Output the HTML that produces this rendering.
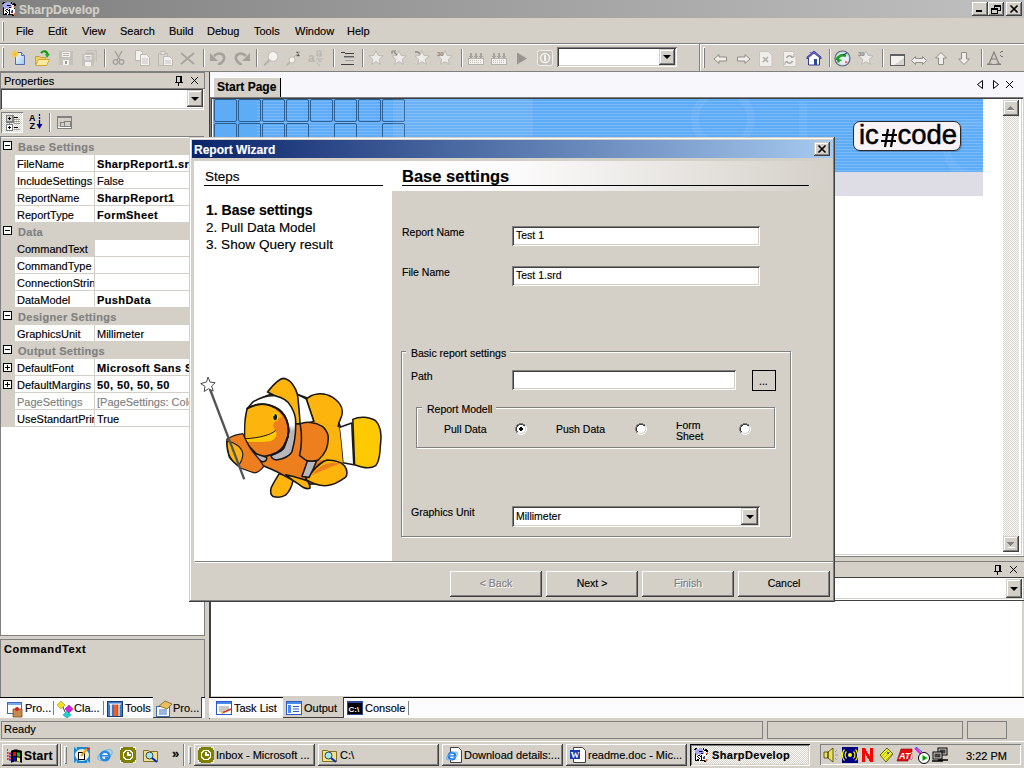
<!DOCTYPE html>
<html><head><meta charset="utf-8"><style>
*{margin:0;padding:0;box-sizing:border-box}
html,body{width:1024px;height:768px;overflow:hidden;background:#d4d0c8;font-family:"Liberation Sans",sans-serif;font-size:11px;color:#000}
.a{position:absolute}
.t{position:absolute;white-space:nowrap;line-height:1;-webkit-text-stroke:0.15px currentColor}
.raised{background:#d4d0c8;box-shadow:inset -1px -1px #404040,inset 1px 1px #fff,inset -2px -2px #808080,inset 2px 2px #d4d0c8}
.raised2{background:#d4d0c8;box-shadow:inset -1px -1px #404040,inset 1px 1px #d4d0c8,inset -2px -2px #808080,inset 2px 2px #fff}
.sunken{background:#fff;box-shadow:inset 1px 1px #808080,inset -1px -1px #fff,inset 2px 2px #404040,inset -2px -2px #d4d0c8}
.pressed{box-shadow:inset 1px 1px #000,inset -1px -1px #fff,inset 2px 2px #808080,inset -2px -2px #d4d0c8}
.thin{box-shadow:inset 1px 1px #808080,inset -1px -1px #fff}
.dd{position:absolute;background:#d4d0c8;box-shadow:inset -1px -1px #404040,inset 1px 1px #d4d0c8,inset -2px -2px #808080,inset 2px 2px #fff}
.dd:after{content:"";position:absolute;left:50%;top:50%;margin-left:-4px;margin-top:-2px;border-left:4px solid transparent;border-right:4px solid transparent;border-top:4px solid #000}
.ic{position:absolute;width:16px;height:16px}
.g{color:#808080}
.b{font-weight:bold}
</style></head><body>
<div class="a" style="left:0px;top:0px;width:1024px;height:18px;background:linear-gradient(to right,#808080,#c0c0c0)"></div>
<div class="t" style="left:19px;top:4px;font-size:12px;font-weight:bold;color:#d4d0c8">SharpDevelop</div>
<div class="a raised" style="left:972px;top:2px;width:16px;height:14px;"></div>
<div class="a raised" style="left:988px;top:2px;width:16px;height:14px;"></div>
<div class="a raised" style="left:1006px;top:2px;width:16px;height:14px;"></div>
<div class="a" style="left:976px;top:10px;width:6px;height:2px;background:#000"></div>
<div class="a" style="left:994px;top:5px;width:7px;height:6px;border:1px solid #000;border-top-width:2px"></div>
<div class="a" style="left:991px;top:8px;width:7px;height:6px;border:1px solid #000;border-top-width:2px;background:#d4d0c8"></div>
<svg class="a" style="left:1006px;top:2px" width="16" height="14"><path d="M4.5 3.5 L11.5 10.5 M11.5 3.5 L4.5 10.5" stroke="#000" stroke-width="1.6"/></svg>
<div class="a" style="left:2px;top:21px;width:2px;height:20px;box-shadow:inset 1px 1px #fff,inset -1px -1px #808080"></div>
<div class="t" style="left:16px;top:26px;">File</div>
<div class="t" style="left:48px;top:26px;">Edit</div>
<div class="t" style="left:82px;top:26px;">View</div>
<div class="t" style="left:120px;top:26px;">Search</div>
<div class="t" style="left:169px;top:26px;">Build</div>
<div class="t" style="left:207px;top:26px;">Debug</div>
<div class="t" style="left:254px;top:26px;">Tools</div>
<div class="t" style="left:295px;top:26px;">Window</div>
<div class="t" style="left:347px;top:26px;">Help</div>
<div class="a" style="left:0px;top:43px;width:1024px;height:1px;background:#808080"></div>
<div class="a" style="left:0px;top:44px;width:1024px;height:1px;background:#fff"></div>
<div class="a" style="left:2px;top:47px;width:2px;height:21px;box-shadow:inset 1px 1px #fff,inset -1px -1px #808080"></div>
<div class="a" style="left:703px;top:47px;width:2px;height:21px;box-shadow:inset 1px 1px #fff,inset -1px -1px #808080"></div>
<div class="a" style="left:0px;top:71px;width:1024px;height:1px;background:#808080"></div>
<div class="a" style="left:699px;top:44px;width:1px;height:27px;background:#808080"></div>
<div class="a" style="left:700px;top:44px;width:1px;height:27px;background:#fff"></div>
<div class="a" style="left:104px;top:49px;width:1px;height:18px;background:#808080"></div>
<div class="a" style="left:105px;top:49px;width:1px;height:18px;background:#fff"></div>
<div class="a" style="left:203px;top:49px;width:1px;height:18px;background:#808080"></div>
<div class="a" style="left:204px;top:49px;width:1px;height:18px;background:#fff"></div>
<div class="a" style="left:256px;top:49px;width:1px;height:18px;background:#808080"></div>
<div class="a" style="left:257px;top:49px;width:1px;height:18px;background:#fff"></div>
<div class="a" style="left:333px;top:49px;width:1px;height:18px;background:#808080"></div>
<div class="a" style="left:334px;top:49px;width:1px;height:18px;background:#fff"></div>
<div class="a" style="left:362px;top:49px;width:1px;height:18px;background:#808080"></div>
<div class="a" style="left:363px;top:49px;width:1px;height:18px;background:#fff"></div>
<div class="a" style="left:461px;top:49px;width:1px;height:18px;background:#808080"></div>
<div class="a" style="left:462px;top:49px;width:1px;height:18px;background:#fff"></div>
<div class="a" style="left:829px;top:49px;width:1px;height:18px;background:#808080"></div>
<div class="a" style="left:830px;top:49px;width:1px;height:18px;background:#fff"></div>
<div class="a" style="left:882px;top:49px;width:1px;height:18px;background:#808080"></div>
<div class="a" style="left:883px;top:49px;width:1px;height:18px;background:#fff"></div>
<div class="a" style="left:981px;top:49px;width:1px;height:18px;background:#808080"></div>
<div class="a" style="left:982px;top:49px;width:1px;height:18px;background:#fff"></div>
<div class="a sunken" style="left:557px;top:47px;width:120px;height:20px;"></div>
<div class="dd" style="left:659px;top:49px;width:16px;height:16px"></div>
<div class="a" style="left:0px;top:72px;width:205px;height:17px;border:1px solid #808080;border-bottom:none"></div>
<div class="t" style="left:4px;top:76px;">Properties</div>
<svg class="a" style="left:175px;top:76px" width="8" height="10" shape-rendering="crispEdges"><path d="M1 0h6v1h-6zM1 1h1v5h-1zM5 1h2v5h-2zM0 6h8v1h-8zM3 7h1v3h-1z" fill="#000"/></svg>
<svg class="a" style="left:191px;top:77px" width="8" height="8" shape-rendering="crispEdges"><path d="M0 0l7 7M7 0l-7 7" stroke="#000" stroke-width="1"/></svg>
<div class="a sunken" style="left:0px;top:88px;width:204px;height:22px;"></div>
<div class="dd" style="left:187px;top:90px;width:16px;height:17px"></div>
<div class="a" style="left:1px;top:112px;width:22px;height:21px;background-color:#fff;background-image:linear-gradient(45deg,#d4d0c8 25%,transparent 25%,transparent 75%,#d4d0c8 75%),linear-gradient(45deg,#d4d0c8 25%,transparent 25%,transparent 75%,#d4d0c8 75%);background-size:2px 2px;background-position:0 0,1px 1px;box-shadow:inset 1px 1px #808080,inset -1px -1px #fff"></div>
<div class="a" style="left:49px;top:113px;width:1px;height:19px;background:#808080"></div>
<div class="a" style="left:50px;top:113px;width:1px;height:19px;background:#fff"></div>
<div class="a" style="left:0px;top:136px;width:204px;height:1px;background:#808080"></div>
<div class="a" style="left:0px;top:137px;width:205px;height:499px;background:#fff;box-shadow:inset 1px 0 #808080,inset -1px 0 #808080,inset 0 -1px #808080"></div>
<div class="a" style="left:1px;top:138px;width:203px;height:17px;background:#d4d0c8"></div>
<div class="a" style="left:3px;top:141px;width:9px;height:9px;border:1px solid #000;background:#fff"></div>
<div class="a" style="left:5px;top:145px;width:5px;height:1px;background:#000"></div>
<div class="t" style="left:18px;top:142px;font-weight:bold;color:#808080;letter-spacing:0.3px">Base Settings</div>
<div class="a" style="left:1px;top:155px;width:14px;height:17px;background:#d4d0c8"></div>
<div class="a" style="left:15px;top:171px;width:189px;height:1px;background:#d4d0c8"></div>
<div class="a" style="left:94px;top:155px;width:1px;height:17px;background:#d4d0c8"></div>
<div class="t" style="left:17px;top:159px;width:77px;overflow:hidden;">FileName</div>
<div class="t" style="left:97px;top:159px;width:92px;overflow:hidden;"><b style="letter-spacing:0.4px">SharpReport1.srd</b></div>
<div class="a" style="left:1px;top:172px;width:14px;height:17px;background:#d4d0c8"></div>
<div class="a" style="left:15px;top:188px;width:189px;height:1px;background:#d4d0c8"></div>
<div class="a" style="left:94px;top:172px;width:1px;height:17px;background:#d4d0c8"></div>
<div class="t" style="left:17px;top:176px;width:77px;overflow:hidden;">IncludeSettings</div>
<div class="t" style="left:97px;top:176px;width:92px;overflow:hidden;">False</div>
<div class="a" style="left:1px;top:189px;width:14px;height:17px;background:#d4d0c8"></div>
<div class="a" style="left:15px;top:205px;width:189px;height:1px;background:#d4d0c8"></div>
<div class="a" style="left:94px;top:189px;width:1px;height:17px;background:#d4d0c8"></div>
<div class="t" style="left:17px;top:193px;width:77px;overflow:hidden;">ReportName</div>
<div class="t" style="left:97px;top:193px;width:92px;overflow:hidden;"><b style="letter-spacing:0.4px">SharpReport1</b></div>
<div class="a" style="left:1px;top:206px;width:14px;height:17px;background:#d4d0c8"></div>
<div class="a" style="left:15px;top:222px;width:189px;height:1px;background:#d4d0c8"></div>
<div class="a" style="left:94px;top:206px;width:1px;height:17px;background:#d4d0c8"></div>
<div class="t" style="left:17px;top:210px;width:77px;overflow:hidden;">ReportType</div>
<div class="t" style="left:97px;top:210px;width:92px;overflow:hidden;"><b style="letter-spacing:0.4px">FormSheet</b></div>
<div class="a" style="left:1px;top:223px;width:203px;height:17px;background:#d4d0c8"></div>
<div class="a" style="left:3px;top:226px;width:9px;height:9px;border:1px solid #000;background:#fff"></div>
<div class="a" style="left:5px;top:230px;width:5px;height:1px;background:#000"></div>
<div class="t" style="left:18px;top:227px;font-weight:bold;color:#808080;letter-spacing:0.3px">Data</div>
<div class="a" style="left:1px;top:240px;width:14px;height:17px;background:#d4d0c8"></div>
<div class="a" style="left:15px;top:256px;width:189px;height:1px;background:#d4d0c8"></div>
<div class="a" style="left:94px;top:240px;width:1px;height:17px;background:#d4d0c8"></div>
<div class="a" style="left:15px;top:240px;width:79px;height:16px;background:#d4d0c8"></div>
<div class="t" style="left:17px;top:244px;width:77px;overflow:hidden;">CommandText</div>
<div class="t" style="left:97px;top:244px;width:92px;overflow:hidden;"></div>
<div class="a" style="left:1px;top:257px;width:14px;height:17px;background:#d4d0c8"></div>
<div class="a" style="left:15px;top:273px;width:189px;height:1px;background:#d4d0c8"></div>
<div class="a" style="left:94px;top:257px;width:1px;height:17px;background:#d4d0c8"></div>
<div class="t" style="left:17px;top:261px;width:77px;overflow:hidden;">CommandType</div>
<div class="t" style="left:97px;top:261px;width:92px;overflow:hidden;"></div>
<div class="a" style="left:1px;top:274px;width:14px;height:17px;background:#d4d0c8"></div>
<div class="a" style="left:15px;top:290px;width:189px;height:1px;background:#d4d0c8"></div>
<div class="a" style="left:94px;top:274px;width:1px;height:17px;background:#d4d0c8"></div>
<div class="t" style="left:17px;top:278px;width:77px;overflow:hidden;">ConnectionStrin</div>
<div class="t" style="left:97px;top:278px;width:92px;overflow:hidden;"></div>
<div class="a" style="left:1px;top:291px;width:14px;height:17px;background:#d4d0c8"></div>
<div class="a" style="left:15px;top:307px;width:189px;height:1px;background:#d4d0c8"></div>
<div class="a" style="left:94px;top:291px;width:1px;height:17px;background:#d4d0c8"></div>
<div class="t" style="left:17px;top:295px;width:77px;overflow:hidden;">DataModel</div>
<div class="t" style="left:97px;top:295px;width:92px;overflow:hidden;"><b style="letter-spacing:0.4px">PushData</b></div>
<div class="a" style="left:1px;top:308px;width:203px;height:17px;background:#d4d0c8"></div>
<div class="a" style="left:3px;top:311px;width:9px;height:9px;border:1px solid #000;background:#fff"></div>
<div class="a" style="left:5px;top:315px;width:5px;height:1px;background:#000"></div>
<div class="t" style="left:18px;top:312px;font-weight:bold;color:#808080;letter-spacing:0.3px">Designer Settings</div>
<div class="a" style="left:1px;top:325px;width:14px;height:17px;background:#d4d0c8"></div>
<div class="a" style="left:15px;top:341px;width:189px;height:1px;background:#d4d0c8"></div>
<div class="a" style="left:94px;top:325px;width:1px;height:17px;background:#d4d0c8"></div>
<div class="t" style="left:17px;top:329px;width:77px;overflow:hidden;">GraphicsUnit</div>
<div class="t" style="left:97px;top:329px;width:92px;overflow:hidden;">Millimeter</div>
<div class="a" style="left:1px;top:342px;width:203px;height:17px;background:#d4d0c8"></div>
<div class="a" style="left:3px;top:345px;width:9px;height:9px;border:1px solid #000;background:#fff"></div>
<div class="a" style="left:5px;top:349px;width:5px;height:1px;background:#000"></div>
<div class="t" style="left:18px;top:346px;font-weight:bold;color:#808080;letter-spacing:0.3px">Output Settings</div>
<div class="a" style="left:1px;top:359px;width:14px;height:17px;background:#d4d0c8"></div>
<div class="a" style="left:15px;top:375px;width:189px;height:1px;background:#d4d0c8"></div>
<div class="a" style="left:94px;top:359px;width:1px;height:17px;background:#d4d0c8"></div>
<div class="t" style="left:17px;top:363px;width:77px;overflow:hidden;">DefaultFont</div>
<div class="t" style="left:97px;top:363px;width:92px;overflow:hidden;"><b style="letter-spacing:0.4px">Microsoft Sans Serif</b></div>
<div class="a" style="left:3px;top:363px;width:9px;height:9px;border:1px solid #000;background:#fff"></div>
<div class="a" style="left:5px;top:367px;width:5px;height:1px;background:#000"></div>
<div class="a" style="left:7px;top:365px;width:1px;height:5px;background:#000"></div>
<div class="a" style="left:1px;top:376px;width:14px;height:17px;background:#d4d0c8"></div>
<div class="a" style="left:15px;top:392px;width:189px;height:1px;background:#d4d0c8"></div>
<div class="a" style="left:94px;top:376px;width:1px;height:17px;background:#d4d0c8"></div>
<div class="t" style="left:17px;top:380px;width:77px;overflow:hidden;">DefaultMargins</div>
<div class="t" style="left:97px;top:380px;width:92px;overflow:hidden;"><b style="letter-spacing:0.4px">50, 50, 50, 50</b></div>
<div class="a" style="left:3px;top:380px;width:9px;height:9px;border:1px solid #000;background:#fff"></div>
<div class="a" style="left:5px;top:384px;width:5px;height:1px;background:#000"></div>
<div class="a" style="left:7px;top:382px;width:1px;height:5px;background:#000"></div>
<div class="a" style="left:1px;top:393px;width:14px;height:17px;background:#d4d0c8"></div>
<div class="a" style="left:15px;top:409px;width:189px;height:1px;background:#d4d0c8"></div>
<div class="a" style="left:94px;top:393px;width:1px;height:17px;background:#d4d0c8"></div>
<div class="t" style="left:17px;top:397px;width:77px;overflow:hidden;color:#808080;">PageSettings</div>
<div class="t" style="left:97px;top:397px;width:92px;overflow:hidden;color:#808080;">[PageSettings: Color=True]</div>
<div class="a" style="left:1px;top:410px;width:14px;height:17px;background:#d4d0c8"></div>
<div class="a" style="left:15px;top:426px;width:189px;height:1px;background:#d4d0c8"></div>
<div class="a" style="left:94px;top:410px;width:1px;height:17px;background:#d4d0c8"></div>
<div class="t" style="left:17px;top:414px;width:77px;overflow:hidden;">UseStandartPrinter</div>
<div class="t" style="left:97px;top:414px;width:92px;overflow:hidden;">True</div>
<div class="a" style="left:0px;top:639px;width:205px;height:58px;box-shadow:inset 1px 1px #808080,inset -1px 0 #808080"></div>
<div class="t" style="left:4px;top:644px;font-weight:bold;letter-spacing:0.6px">CommandText</div>
<div class="a" style="left:209px;top:72px;width:1px;height:647px;background:#404040"></div>
<div class="a" style="left:210px;top:72px;width:814px;height:25px;background:#f8f8fc"></div>
<div class="a" style="left:213px;top:77px;width:68px;height:20px;background:#d4d0c8;box-shadow:inset 1px 1px #fff,inset -1px 0 #000"></div>
<div class="t" style="left:217px;top:80.5px;font-size:12px;font-weight:bold">Start Page</div>
<svg class="a" style="left:972px;top:78px" width="48" height="14"><path d="M10.5 2.5v8l-5-4z" fill="none" stroke="#000"/><path d="M21.5 2.5v8l5-4z" fill="none" stroke="#000"/><path d="M34 3l7 7M41 3l-7 7" stroke="#000"/></svg>
<div class="a" style="left:210px;top:97px;width:813px;height:459px;background:#fff;box-shadow:inset 1px 1px #808080,inset 2px 2px #404040,inset -1px -1px #fff,inset -2px -2px #d4d0c8"></div>
<div class="a" style="left:213px;top:99px;width:770px;height:73px;background:#5eabf6"></div>
<div class="a" style="left:213px;top:172px;width:770px;height:24px;background:#dedde5"></div>
<div class="a" style="left:1003px;top:116px;width:16px;height:420px;background-color:#fff;background-image:linear-gradient(45deg,#d4d0c8 25%,transparent 25%,transparent 75%,#d4d0c8 75%),linear-gradient(45deg,#d4d0c8 25%,transparent 25%,transparent 75%,#d4d0c8 75%);background-size:2px 2px;background-position:0 0,1px 1px"></div>
<div class="a raised2" style="left:1003px;top:100px;width:16px;height:16px"></div>
<svg class="a" style="left:1003px;top:100px" width="16" height="16" shape-rendering="crispEdges"><path d="M4 10h7v1h-7z" fill="#fff"/><path d="M7 6h1v1h-1zM6 7h3v1h-3zM5 8h5v1h-5zM4 9h7v1h-7z" fill="#808080"/></svg>
<div class="a raised2" style="left:1003px;top:536px;width:16px;height:16px"></div>
<svg class="a" style="left:1003px;top:536px" width="16" height="16" shape-rendering="crispEdges"><path d="M5 11h7v1h-7z" fill="#fff"/><path d="M4 6h7v1h-7zM5 7h5v1h-5zM6 8h3v1h-3zM7 9h1v1h-1z" fill="#808080"/></svg>
<div class="a" style="left:210px;top:556px;width:814px;height:1px;background:#808080"></div>
<div class="a" style="left:210px;top:561px;width:814px;height:1px;background:#808080"></div>
<svg class="a" style="left:994px;top:565px" width="8" height="10" shape-rendering="crispEdges"><path d="M1 0h6v1h-6zM1 1h1v5h-1zM5 1h2v5h-2zM0 6h8v1h-8zM3 7h1v3h-1z" fill="#000"/></svg>
<svg class="a" style="left:1010px;top:566px" width="8" height="8" shape-rendering="crispEdges"><path d="M0 0l7 7M7 0l-7 7" stroke="#000" stroke-width="1"/></svg>
<div class="a" style="left:210px;top:577px;width:814px;height:1px;background:#404040"></div>
<div class="a" style="left:210px;top:578px;width:813px;height:22px;background:#fff;box-shadow:inset 0 -1px #fff,inset 0 -2px #d4d0c8"></div>
<div class="dd" style="left:1006px;top:579px;width:16px;height:19px"></div>
<div class="a" style="left:210px;top:600px;width:814px;height:1px;background:#404040"></div>
<div class="a" style="left:210px;top:601px;width:813px;height:96px;background:#fff;box-shadow:inset 1px 0 #404040,inset -1px -1px #d4d0c8"></div>
<div class="a" style="left:257px;top:99px;width:726px;height:73px;background:repeating-linear-gradient(to bottom,rgba(255,255,255,0.0) 0px,rgba(255,255,255,0.0) 2px,rgba(255,255,255,0.18) 2px,rgba(255,255,255,0.18) 3px)"></div>
<svg class="a" style="left:213px;top:99px" width="200" height="73"><rect x="1.5" y="0.5" width="22" height="22" rx="1.5" fill="none" stroke="#2c5f94" stroke-width="1"/><rect x="25.5" y="0.5" width="22" height="22" rx="1.5" fill="none" stroke="#2c5f94" stroke-width="1"/><rect x="49.5" y="0.5" width="22" height="22" rx="1.5" fill="none" stroke="#2c5f94" stroke-width="1"/><rect x="73.5" y="0.5" width="22" height="22" rx="1.5" fill="none" stroke="#2c5f94" stroke-width="1"/><rect x="97.5" y="0.5" width="22" height="22" rx="1.5" fill="none" stroke="#2c5f94" stroke-width="1"/><rect x="121.5" y="0.5" width="22" height="22" rx="1.5" fill="none" stroke="#2c5f94" stroke-width="1"/><rect x="145.5" y="0.5" width="22" height="22" rx="1.5" fill="none" stroke="#2c5f94" stroke-width="1"/><rect x="169.5" y="0.5" width="22" height="22" rx="1.5" fill="none" stroke="#2c5f94" stroke-width="1"/><rect x="1.5" y="24.5" width="22" height="22" rx="1.5" fill="none" stroke="#2c5f94" stroke-width="1"/><rect x="25.5" y="24.5" width="22" height="22" rx="1.5" fill="none" stroke="#2c5f94" stroke-width="1"/><rect x="49.5" y="24.5" width="22" height="22" rx="1.5" fill="none" stroke="#2c5f94" stroke-width="1"/><rect x="73.5" y="24.5" width="22" height="22" rx="1.5" fill="none" stroke="#2c5f94" stroke-width="1"/><rect x="121.5" y="24.5" width="22" height="22" rx="1.5" fill="none" stroke="#2c5f94" stroke-width="1"/><rect x="169.5" y="24.5" width="22" height="22" rx="1.5" fill="none" stroke="#2c5f94" stroke-width="1"/></svg>
<svg class="a" style="left:213px;top:99px" width="770" height="73"><g fill="none" stroke="rgba(255,255,255,0.06)" stroke-width="8"><circle cx="510" cy="20" r="28"/><circle cx="760" cy="50" r="26"/><path d="M590 73v-70"/></g><path d="M130 73l25-25 25 25z" fill="rgba(255,255,255,0.08)"/><rect x="180" y="0" width="140" height="73" fill="rgba(255,255,255,0.08)"/></svg>
<div class="a" style="left:853px;top:121px;width:108px;height:30px;background:#f7f3f7;border:1px solid #2a2a2a;border-radius:7px;box-shadow:1px 1px 0 rgba(0,0,0,0.2)"></div>
<div class="t" style="left:859px;top:121px;font-size:27.5px;color:#000;-webkit-text-stroke:0.5px #000">ic</div>
<div class="t" style="left:897.5px;top:121px;font-size:27.5px;color:#000;-webkit-text-stroke:0.5px #000">code</div>
<svg class="a" style="left:880px;top:128px;" width="18" height="20" viewBox="0 0 18 20"><path d="M8 1L5 19M14 1L11 19M2 7H17M1 13H16" stroke="#000" stroke-width="2.2"/></svg>
<div class="a" style="left:0px;top:697px;width:205px;height:1px;background:#000"></div>
<div class="a" style="left:0px;top:698px;width:205px;height:20px;background:#fcfcfe"></div>
<div class="a" style="left:153px;top:697px;width:49px;height:21px;background:#d4d0c8;box-shadow:inset -1px -1px #404040"></div>
<div class="t" style="left:25px;top:703px;">Pro...</div>
<div class="t" style="left:74px;top:703px;">Cla...</div>
<div class="t" style="left:125px;top:703px;">Tools</div>
<div class="t" style="left:173px;top:703px;">Pro...</div>
<div class="a" style="left:53px;top:701px;width:1px;height:14px;background:#808080"></div>
<div class="a" style="left:103px;top:701px;width:1px;height:14px;background:#808080"></div>
<div class="a" style="left:209px;top:697px;width:815px;height:1px;background:#000"></div>
<div class="a" style="left:209px;top:698px;width:815px;height:20px;background:#fcfcfe"></div>
<div class="a" style="left:283px;top:697px;width:61px;height:21px;background:#d4d0c8;box-shadow:inset -1px -1px #404040"></div>
<div class="t" style="left:234px;top:703px;">Task List</div>
<div class="t" style="left:304px;top:703px;">Output</div>
<div class="t" style="left:365px;top:703px;">Console</div>
<div class="a" style="left:408px;top:701px;width:1px;height:14px;background:#808080"></div>
<div class="a" style="left:1px;top:721px;width:762px;height:18px;border:1px solid #808080"></div>
<div class="t" style="left:4px;top:724px;">Ready</div>
<div class="a" style="left:767px;top:721px;width:196px;height:18px;border:1px solid #808080"></div>
<div class="a" style="left:967px;top:721px;width:40px;height:18px;border:1px solid #808080"></div>
<div class="a" style="left:0px;top:741px;width:1024px;height:1px;background:#fff"></div>
<div class="a raised" style="left:2px;top:744px;width:56px;height:22px"></div>
<div class="t" style="left:24px;top:750px;font-size:12px;font-weight:bold;letter-spacing:0.3px">Start</div>
<div class="a" style="left:60px;top:744px;width:1px;height:22px;background:#808080"></div>
<div class="a" style="left:61px;top:744px;width:1px;height:22px;background:#fff"></div>
<div class="a" style="left:64px;top:746px;width:3px;height:18px;box-shadow:inset 1px 1px #fff,inset -1px -1px #808080"></div>
<div class="t" style="left:172px;top:747px;font-size:13px;font-weight:bold">&#187;</div>
<div class="a" style="left:183px;top:744px;width:1px;height:22px;background:#808080"></div>
<div class="a" style="left:184px;top:744px;width:1px;height:22px;background:#fff"></div>
<div class="a" style="left:188px;top:746px;width:3px;height:18px;box-shadow:inset 1px 1px #fff,inset -1px -1px #808080"></div>
<div class="a raised" style="left:194px;top:744px;width:121px;height:22px"></div>
<div class="t" style="left:216px;top:750px;">Inbox - Microsoft ...</div>
<div class="a raised" style="left:318px;top:744px;width:121px;height:22px"></div>
<div class="t" style="left:340px;top:750px;">C:\</div>
<div class="a raised" style="left:442px;top:744px;width:121px;height:22px"></div>
<div class="t" style="left:464px;top:750px;">Download details:...</div>
<div class="a raised" style="left:566px;top:744px;width:121px;height:22px"></div>
<div class="t" style="left:588px;top:750px;">readme.doc - Mic...</div>
<div class="a" style="left:690px;top:744px;width:120px;height:22px;box-shadow:inset 1px 1px #000,inset -1px -1px #fff,inset 2px 2px #808080,inset -2px -2px #d4d0c8;background-color:#fff;background-image:linear-gradient(45deg,#d4d0c8 25%,transparent 25%,transparent 75%,#d4d0c8 75%),linear-gradient(45deg,#d4d0c8 25%,transparent 25%,transparent 75%,#d4d0c8 75%);background-size:2px 2px;background-position:0 0,1px 1px"></div>
<div class="t" style="left:712px;top:750px;font-weight:bold;letter-spacing:0.35px">SharpDevelop</div>
<div class="a" style="left:820px;top:744px;width:201px;height:21px;box-shadow:inset 1px 1px #808080,inset -1px -1px #fff"></div>
<div class="t" style="left:966px;top:751px;">3:22 PM</div>
<div class="a" style="left:189px;top:137px;width:646px;height:465px;background:#d4d0c8;box-shadow:inset -1px -1px #404040,inset 1px 1px #d4d0c8,inset -2px -2px #808080,inset 2px 2px #fff"></div>
<div class="a" style="left:192px;top:140px;width:641px;height:18px;background:linear-gradient(to right,#0a246a,#a6caf0)"></div>
<div class="t" style="left:194px;top:144px;font-size:12px;font-weight:bold;color:#fff">Report Wizard</div>
<div class="a raised2" style="left:814px;top:142px;width:16px;height:14px"></div>
<svg class="a" style="left:814px;top:142px" width="16" height="14"><path d="M4.5 3.5 L11.5 10.5 M11.5 3.5 L4.5 10.5" stroke="#000" stroke-width="1.6"/></svg>
<div class="a" style="left:194px;top:161px;width:198px;height:400px;background:#fff"></div>
<div class="t" style="left:205px;top:170px;font-size:13.5px">Steps</div>
<div class="a" style="left:204px;top:185px;width:179px;height:1px;background:#000"></div>
<div class="t" style="left:206px;top:203px;font-size:14px;font-weight:bold">1. Base settings</div>
<div class="t" style="left:206px;top:221px;font-size:13.4px">2. Pull Data Model</div>
<div class="t" style="left:206px;top:238px;font-size:13.6px">3. Show Query result</div>
<div class="a" style="left:392px;top:161px;width:441px;height:30px;background:linear-gradient(to right,#fff 0%,#fbfafa 30%,#d4d0c8 100%)"></div>
<div class="t" style="left:402px;top:167.5px;font-size:16.5px;font-weight:bold">Base settings</div>
<div class="a" style="left:402px;top:185px;width:407px;height:1px;background:#000"></div>
<div class="a" style="left:195px;top:561px;width:638px;height:1px;background:#808080"></div>
<div class="a" style="left:195px;top:562px;width:638px;height:1px;background:#fff"></div>
<div class="t" style="left:402px;top:227px;font-size:10.5px;">Report Name</div>
<div class="t" style="left:402px;top:267px;font-size:10.5px;">File Name</div>
<div class="a sunken" style="left:512px;top:226px;width:248px;height:20px"></div>
<div class="t" style="left:516px;top:230px;font-size:10.5px;">Test 1</div>
<div class="a sunken" style="left:512px;top:266px;width:248px;height:20px"></div>
<div class="t" style="left:516px;top:270px;font-size:10.5px;">Test 1.srd</div>
<div class="a" style="left:402px;top:352px;width:390px;height:186px;border:1px solid #fff"></div>
<div class="a" style="left:401px;top:351px;width:390px;height:186px;border:1px solid #808080"></div>
<div class="a" style="left:406px;top:346px;width:104px;height:10px;background:#d4d0c8"></div>
<div class="t" style="left:411px;top:348px;font-size:10.5px;">Basic report settings</div>
<div class="t" style="left:411px;top:371px;font-size:10.5px;">Path</div>
<div class="a sunken" style="left:512px;top:370px;width:224px;height:20px"></div>
<div class="a" style="left:752px;top:370px;width:24px;height:21px;border:1px solid #000"></div>
<div class="t" style="left:759px;top:376px;font-size:10.5px;">...</div>
<div class="a" style="left:417px;top:408px;width:359px;height:41px;border:1px solid #fff"></div>
<div class="a" style="left:416px;top:407px;width:359px;height:41px;border:1px solid #808080"></div>
<div class="a" style="left:422px;top:402px;width:74px;height:10px;background:#d4d0c8"></div>
<div class="t" style="left:427px;top:404px;font-size:10.5px;">Report Modell</div>
<div class="t" style="left:444px;top:424px;font-size:10.5px;">Pull Data</div>
<div class="t" style="left:556px;top:424px;font-size:10.5px;">Push Data</div>
<div class="a" style="left:676px;top:421.5px;width:40px;height:8px;overflow:hidden"><div class="t" style="left:0;top:-1.5px;font-size:10.5px">Form</div></div>
<div class="t" style="left:676px;top:431px;font-size:10.5px;">Sheet</div>
<svg class="a" style="left:515px;top:423px" width="12" height="12" shape-rendering="crispEdges"><rect x="4" y="0" width="1" height="1" fill="#808080"/><rect x="5" y="0" width="1" height="1" fill="#808080"/><rect x="6" y="0" width="1" height="1" fill="#808080"/><rect x="7" y="0" width="1" height="1" fill="#808080"/><rect x="2" y="1" width="1" height="1" fill="#808080"/><rect x="3" y="1" width="1" height="1" fill="#808080"/><rect x="4" y="1" width="1" height="1" fill="#404040"/><rect x="5" y="1" width="1" height="1" fill="#404040"/><rect x="6" y="1" width="1" height="1" fill="#404040"/><rect x="7" y="1" width="1" height="1" fill="#404040"/><rect x="8" y="1" width="1" height="1" fill="#808080"/><rect x="9" y="1" width="1" height="1" fill="#808080"/><rect x="1" y="2" width="1" height="1" fill="#808080"/><rect x="2" y="2" width="1" height="1" fill="#404040"/><rect x="3" y="2" width="1" height="1" fill="#404040"/><rect x="4" y="2" width="1" height="1" fill="#fff"/><rect x="5" y="2" width="1" height="1" fill="#fff"/><rect x="6" y="2" width="1" height="1" fill="#fff"/><rect x="7" y="2" width="1" height="1" fill="#fff"/><rect x="8" y="2" width="1" height="1" fill="#404040"/><rect x="9" y="2" width="1" height="1" fill="#404040"/><rect x="10" y="2" width="1" height="1" fill="#d4d0c8"/><rect x="1" y="3" width="1" height="1" fill="#808080"/><rect x="2" y="3" width="1" height="1" fill="#404040"/><rect x="3" y="3" width="1" height="1" fill="#fff"/><rect x="4" y="3" width="1" height="1" fill="#fff"/><rect x="5" y="3" width="1" height="1" fill="#fff"/><rect x="6" y="3" width="1" height="1" fill="#fff"/><rect x="7" y="3" width="1" height="1" fill="#fff"/><rect x="8" y="3" width="1" height="1" fill="#fff"/><rect x="9" y="3" width="1" height="1" fill="#d4d0c8"/><rect x="10" y="3" width="1" height="1" fill="#fff"/><rect x="0" y="4" width="1" height="1" fill="#808080"/><rect x="1" y="4" width="1" height="1" fill="#404040"/><rect x="2" y="4" width="1" height="1" fill="#fff"/><rect x="3" y="4" width="1" height="1" fill="#fff"/><rect x="4" y="4" width="1" height="1" fill="#fff"/><rect x="5" y="4" width="1" height="1" fill="#000"/><rect x="6" y="4" width="1" height="1" fill="#000"/><rect x="7" y="4" width="1" height="1" fill="#fff"/><rect x="8" y="4" width="1" height="1" fill="#fff"/><rect x="9" y="4" width="1" height="1" fill="#fff"/><rect x="10" y="4" width="1" height="1" fill="#d4d0c8"/><rect x="11" y="4" width="1" height="1" fill="#fff"/><rect x="0" y="5" width="1" height="1" fill="#808080"/><rect x="1" y="5" width="1" height="1" fill="#404040"/><rect x="2" y="5" width="1" height="1" fill="#fff"/><rect x="3" y="5" width="1" height="1" fill="#fff"/><rect x="4" y="5" width="1" height="1" fill="#000"/><rect x="5" y="5" width="1" height="1" fill="#000"/><rect x="6" y="5" width="1" height="1" fill="#000"/><rect x="7" y="5" width="1" height="1" fill="#000"/><rect x="8" y="5" width="1" height="1" fill="#fff"/><rect x="9" y="5" width="1" height="1" fill="#fff"/><rect x="10" y="5" width="1" height="1" fill="#d4d0c8"/><rect x="11" y="5" width="1" height="1" fill="#fff"/><rect x="0" y="6" width="1" height="1" fill="#808080"/><rect x="1" y="6" width="1" height="1" fill="#404040"/><rect x="2" y="6" width="1" height="1" fill="#fff"/><rect x="3" y="6" width="1" height="1" fill="#fff"/><rect x="4" y="6" width="1" height="1" fill="#000"/><rect x="5" y="6" width="1" height="1" fill="#000"/><rect x="6" y="6" width="1" height="1" fill="#000"/><rect x="7" y="6" width="1" height="1" fill="#000"/><rect x="8" y="6" width="1" height="1" fill="#fff"/><rect x="9" y="6" width="1" height="1" fill="#fff"/><rect x="10" y="6" width="1" height="1" fill="#d4d0c8"/><rect x="11" y="6" width="1" height="1" fill="#fff"/><rect x="0" y="7" width="1" height="1" fill="#808080"/><rect x="1" y="7" width="1" height="1" fill="#404040"/><rect x="2" y="7" width="1" height="1" fill="#fff"/><rect x="3" y="7" width="1" height="1" fill="#fff"/><rect x="4" y="7" width="1" height="1" fill="#fff"/><rect x="5" y="7" width="1" height="1" fill="#000"/><rect x="6" y="7" width="1" height="1" fill="#000"/><rect x="7" y="7" width="1" height="1" fill="#fff"/><rect x="8" y="7" width="1" height="1" fill="#fff"/><rect x="9" y="7" width="1" height="1" fill="#fff"/><rect x="10" y="7" width="1" height="1" fill="#d4d0c8"/><rect x="11" y="7" width="1" height="1" fill="#fff"/><rect x="1" y="8" width="1" height="1" fill="#808080"/><rect x="2" y="8" width="1" height="1" fill="#404040"/><rect x="3" y="8" width="1" height="1" fill="#fff"/><rect x="4" y="8" width="1" height="1" fill="#fff"/><rect x="5" y="8" width="1" height="1" fill="#fff"/><rect x="6" y="8" width="1" height="1" fill="#fff"/><rect x="7" y="8" width="1" height="1" fill="#fff"/><rect x="8" y="8" width="1" height="1" fill="#fff"/><rect x="9" y="8" width="1" height="1" fill="#d4d0c8"/><rect x="10" y="8" width="1" height="1" fill="#fff"/><rect x="1" y="9" width="1" height="1" fill="#808080"/><rect x="2" y="9" width="1" height="1" fill="#d4d0c8"/><rect x="3" y="9" width="1" height="1" fill="#d4d0c8"/><rect x="4" y="9" width="1" height="1" fill="#fff"/><rect x="5" y="9" width="1" height="1" fill="#fff"/><rect x="6" y="9" width="1" height="1" fill="#fff"/><rect x="7" y="9" width="1" height="1" fill="#fff"/><rect x="8" y="9" width="1" height="1" fill="#d4d0c8"/><rect x="9" y="9" width="1" height="1" fill="#d4d0c8"/><rect x="10" y="9" width="1" height="1" fill="#fff"/><rect x="2" y="10" width="1" height="1" fill="#fff"/><rect x="3" y="10" width="1" height="1" fill="#fff"/><rect x="4" y="10" width="1" height="1" fill="#d4d0c8"/><rect x="5" y="10" width="1" height="1" fill="#d4d0c8"/><rect x="6" y="10" width="1" height="1" fill="#d4d0c8"/><rect x="7" y="10" width="1" height="1" fill="#d4d0c8"/><rect x="8" y="10" width="1" height="1" fill="#fff"/><rect x="9" y="10" width="1" height="1" fill="#fff"/><rect x="4" y="11" width="1" height="1" fill="#fff"/><rect x="5" y="11" width="1" height="1" fill="#fff"/><rect x="6" y="11" width="1" height="1" fill="#fff"/><rect x="7" y="11" width="1" height="1" fill="#fff"/></svg>
<svg class="a" style="left:635px;top:423px" width="12" height="12" shape-rendering="crispEdges"><rect x="4" y="0" width="1" height="1" fill="#808080"/><rect x="5" y="0" width="1" height="1" fill="#808080"/><rect x="6" y="0" width="1" height="1" fill="#808080"/><rect x="7" y="0" width="1" height="1" fill="#808080"/><rect x="2" y="1" width="1" height="1" fill="#808080"/><rect x="3" y="1" width="1" height="1" fill="#808080"/><rect x="4" y="1" width="1" height="1" fill="#404040"/><rect x="5" y="1" width="1" height="1" fill="#404040"/><rect x="6" y="1" width="1" height="1" fill="#404040"/><rect x="7" y="1" width="1" height="1" fill="#404040"/><rect x="8" y="1" width="1" height="1" fill="#808080"/><rect x="9" y="1" width="1" height="1" fill="#808080"/><rect x="1" y="2" width="1" height="1" fill="#808080"/><rect x="2" y="2" width="1" height="1" fill="#404040"/><rect x="3" y="2" width="1" height="1" fill="#404040"/><rect x="4" y="2" width="1" height="1" fill="#fff"/><rect x="5" y="2" width="1" height="1" fill="#fff"/><rect x="6" y="2" width="1" height="1" fill="#fff"/><rect x="7" y="2" width="1" height="1" fill="#fff"/><rect x="8" y="2" width="1" height="1" fill="#404040"/><rect x="9" y="2" width="1" height="1" fill="#404040"/><rect x="10" y="2" width="1" height="1" fill="#d4d0c8"/><rect x="1" y="3" width="1" height="1" fill="#808080"/><rect x="2" y="3" width="1" height="1" fill="#404040"/><rect x="3" y="3" width="1" height="1" fill="#fff"/><rect x="4" y="3" width="1" height="1" fill="#fff"/><rect x="5" y="3" width="1" height="1" fill="#fff"/><rect x="6" y="3" width="1" height="1" fill="#fff"/><rect x="7" y="3" width="1" height="1" fill="#fff"/><rect x="8" y="3" width="1" height="1" fill="#fff"/><rect x="9" y="3" width="1" height="1" fill="#d4d0c8"/><rect x="10" y="3" width="1" height="1" fill="#fff"/><rect x="0" y="4" width="1" height="1" fill="#808080"/><rect x="1" y="4" width="1" height="1" fill="#404040"/><rect x="2" y="4" width="1" height="1" fill="#fff"/><rect x="3" y="4" width="1" height="1" fill="#fff"/><rect x="4" y="4" width="1" height="1" fill="#fff"/><rect x="5" y="4" width="1" height="1" fill="#fff"/><rect x="6" y="4" width="1" height="1" fill="#fff"/><rect x="7" y="4" width="1" height="1" fill="#fff"/><rect x="8" y="4" width="1" height="1" fill="#fff"/><rect x="9" y="4" width="1" height="1" fill="#fff"/><rect x="10" y="4" width="1" height="1" fill="#d4d0c8"/><rect x="11" y="4" width="1" height="1" fill="#fff"/><rect x="0" y="5" width="1" height="1" fill="#808080"/><rect x="1" y="5" width="1" height="1" fill="#404040"/><rect x="2" y="5" width="1" height="1" fill="#fff"/><rect x="3" y="5" width="1" height="1" fill="#fff"/><rect x="4" y="5" width="1" height="1" fill="#fff"/><rect x="5" y="5" width="1" height="1" fill="#fff"/><rect x="6" y="5" width="1" height="1" fill="#fff"/><rect x="7" y="5" width="1" height="1" fill="#fff"/><rect x="8" y="5" width="1" height="1" fill="#fff"/><rect x="9" y="5" width="1" height="1" fill="#fff"/><rect x="10" y="5" width="1" height="1" fill="#d4d0c8"/><rect x="11" y="5" width="1" height="1" fill="#fff"/><rect x="0" y="6" width="1" height="1" fill="#808080"/><rect x="1" y="6" width="1" height="1" fill="#404040"/><rect x="2" y="6" width="1" height="1" fill="#fff"/><rect x="3" y="6" width="1" height="1" fill="#fff"/><rect x="4" y="6" width="1" height="1" fill="#fff"/><rect x="5" y="6" width="1" height="1" fill="#fff"/><rect x="6" y="6" width="1" height="1" fill="#fff"/><rect x="7" y="6" width="1" height="1" fill="#fff"/><rect x="8" y="6" width="1" height="1" fill="#fff"/><rect x="9" y="6" width="1" height="1" fill="#fff"/><rect x="10" y="6" width="1" height="1" fill="#d4d0c8"/><rect x="11" y="6" width="1" height="1" fill="#fff"/><rect x="0" y="7" width="1" height="1" fill="#808080"/><rect x="1" y="7" width="1" height="1" fill="#404040"/><rect x="2" y="7" width="1" height="1" fill="#fff"/><rect x="3" y="7" width="1" height="1" fill="#fff"/><rect x="4" y="7" width="1" height="1" fill="#fff"/><rect x="5" y="7" width="1" height="1" fill="#fff"/><rect x="6" y="7" width="1" height="1" fill="#fff"/><rect x="7" y="7" width="1" height="1" fill="#fff"/><rect x="8" y="7" width="1" height="1" fill="#fff"/><rect x="9" y="7" width="1" height="1" fill="#fff"/><rect x="10" y="7" width="1" height="1" fill="#d4d0c8"/><rect x="11" y="7" width="1" height="1" fill="#fff"/><rect x="1" y="8" width="1" height="1" fill="#808080"/><rect x="2" y="8" width="1" height="1" fill="#404040"/><rect x="3" y="8" width="1" height="1" fill="#fff"/><rect x="4" y="8" width="1" height="1" fill="#fff"/><rect x="5" y="8" width="1" height="1" fill="#fff"/><rect x="6" y="8" width="1" height="1" fill="#fff"/><rect x="7" y="8" width="1" height="1" fill="#fff"/><rect x="8" y="8" width="1" height="1" fill="#fff"/><rect x="9" y="8" width="1" height="1" fill="#d4d0c8"/><rect x="10" y="8" width="1" height="1" fill="#fff"/><rect x="1" y="9" width="1" height="1" fill="#808080"/><rect x="2" y="9" width="1" height="1" fill="#d4d0c8"/><rect x="3" y="9" width="1" height="1" fill="#d4d0c8"/><rect x="4" y="9" width="1" height="1" fill="#fff"/><rect x="5" y="9" width="1" height="1" fill="#fff"/><rect x="6" y="9" width="1" height="1" fill="#fff"/><rect x="7" y="9" width="1" height="1" fill="#fff"/><rect x="8" y="9" width="1" height="1" fill="#d4d0c8"/><rect x="9" y="9" width="1" height="1" fill="#d4d0c8"/><rect x="10" y="9" width="1" height="1" fill="#fff"/><rect x="2" y="10" width="1" height="1" fill="#fff"/><rect x="3" y="10" width="1" height="1" fill="#fff"/><rect x="4" y="10" width="1" height="1" fill="#d4d0c8"/><rect x="5" y="10" width="1" height="1" fill="#d4d0c8"/><rect x="6" y="10" width="1" height="1" fill="#d4d0c8"/><rect x="7" y="10" width="1" height="1" fill="#d4d0c8"/><rect x="8" y="10" width="1" height="1" fill="#fff"/><rect x="9" y="10" width="1" height="1" fill="#fff"/><rect x="4" y="11" width="1" height="1" fill="#fff"/><rect x="5" y="11" width="1" height="1" fill="#fff"/><rect x="6" y="11" width="1" height="1" fill="#fff"/><rect x="7" y="11" width="1" height="1" fill="#fff"/></svg>
<svg class="a" style="left:739px;top:423px" width="12" height="12" shape-rendering="crispEdges"><rect x="4" y="0" width="1" height="1" fill="#808080"/><rect x="5" y="0" width="1" height="1" fill="#808080"/><rect x="6" y="0" width="1" height="1" fill="#808080"/><rect x="7" y="0" width="1" height="1" fill="#808080"/><rect x="2" y="1" width="1" height="1" fill="#808080"/><rect x="3" y="1" width="1" height="1" fill="#808080"/><rect x="4" y="1" width="1" height="1" fill="#404040"/><rect x="5" y="1" width="1" height="1" fill="#404040"/><rect x="6" y="1" width="1" height="1" fill="#404040"/><rect x="7" y="1" width="1" height="1" fill="#404040"/><rect x="8" y="1" width="1" height="1" fill="#808080"/><rect x="9" y="1" width="1" height="1" fill="#808080"/><rect x="1" y="2" width="1" height="1" fill="#808080"/><rect x="2" y="2" width="1" height="1" fill="#404040"/><rect x="3" y="2" width="1" height="1" fill="#404040"/><rect x="4" y="2" width="1" height="1" fill="#fff"/><rect x="5" y="2" width="1" height="1" fill="#fff"/><rect x="6" y="2" width="1" height="1" fill="#fff"/><rect x="7" y="2" width="1" height="1" fill="#fff"/><rect x="8" y="2" width="1" height="1" fill="#404040"/><rect x="9" y="2" width="1" height="1" fill="#404040"/><rect x="10" y="2" width="1" height="1" fill="#d4d0c8"/><rect x="1" y="3" width="1" height="1" fill="#808080"/><rect x="2" y="3" width="1" height="1" fill="#404040"/><rect x="3" y="3" width="1" height="1" fill="#fff"/><rect x="4" y="3" width="1" height="1" fill="#fff"/><rect x="5" y="3" width="1" height="1" fill="#fff"/><rect x="6" y="3" width="1" height="1" fill="#fff"/><rect x="7" y="3" width="1" height="1" fill="#fff"/><rect x="8" y="3" width="1" height="1" fill="#fff"/><rect x="9" y="3" width="1" height="1" fill="#d4d0c8"/><rect x="10" y="3" width="1" height="1" fill="#fff"/><rect x="0" y="4" width="1" height="1" fill="#808080"/><rect x="1" y="4" width="1" height="1" fill="#404040"/><rect x="2" y="4" width="1" height="1" fill="#fff"/><rect x="3" y="4" width="1" height="1" fill="#fff"/><rect x="4" y="4" width="1" height="1" fill="#fff"/><rect x="5" y="4" width="1" height="1" fill="#fff"/><rect x="6" y="4" width="1" height="1" fill="#fff"/><rect x="7" y="4" width="1" height="1" fill="#fff"/><rect x="8" y="4" width="1" height="1" fill="#fff"/><rect x="9" y="4" width="1" height="1" fill="#fff"/><rect x="10" y="4" width="1" height="1" fill="#d4d0c8"/><rect x="11" y="4" width="1" height="1" fill="#fff"/><rect x="0" y="5" width="1" height="1" fill="#808080"/><rect x="1" y="5" width="1" height="1" fill="#404040"/><rect x="2" y="5" width="1" height="1" fill="#fff"/><rect x="3" y="5" width="1" height="1" fill="#fff"/><rect x="4" y="5" width="1" height="1" fill="#fff"/><rect x="5" y="5" width="1" height="1" fill="#fff"/><rect x="6" y="5" width="1" height="1" fill="#fff"/><rect x="7" y="5" width="1" height="1" fill="#fff"/><rect x="8" y="5" width="1" height="1" fill="#fff"/><rect x="9" y="5" width="1" height="1" fill="#fff"/><rect x="10" y="5" width="1" height="1" fill="#d4d0c8"/><rect x="11" y="5" width="1" height="1" fill="#fff"/><rect x="0" y="6" width="1" height="1" fill="#808080"/><rect x="1" y="6" width="1" height="1" fill="#404040"/><rect x="2" y="6" width="1" height="1" fill="#fff"/><rect x="3" y="6" width="1" height="1" fill="#fff"/><rect x="4" y="6" width="1" height="1" fill="#fff"/><rect x="5" y="6" width="1" height="1" fill="#fff"/><rect x="6" y="6" width="1" height="1" fill="#fff"/><rect x="7" y="6" width="1" height="1" fill="#fff"/><rect x="8" y="6" width="1" height="1" fill="#fff"/><rect x="9" y="6" width="1" height="1" fill="#fff"/><rect x="10" y="6" width="1" height="1" fill="#d4d0c8"/><rect x="11" y="6" width="1" height="1" fill="#fff"/><rect x="0" y="7" width="1" height="1" fill="#808080"/><rect x="1" y="7" width="1" height="1" fill="#404040"/><rect x="2" y="7" width="1" height="1" fill="#fff"/><rect x="3" y="7" width="1" height="1" fill="#fff"/><rect x="4" y="7" width="1" height="1" fill="#fff"/><rect x="5" y="7" width="1" height="1" fill="#fff"/><rect x="6" y="7" width="1" height="1" fill="#fff"/><rect x="7" y="7" width="1" height="1" fill="#fff"/><rect x="8" y="7" width="1" height="1" fill="#fff"/><rect x="9" y="7" width="1" height="1" fill="#fff"/><rect x="10" y="7" width="1" height="1" fill="#d4d0c8"/><rect x="11" y="7" width="1" height="1" fill="#fff"/><rect x="1" y="8" width="1" height="1" fill="#808080"/><rect x="2" y="8" width="1" height="1" fill="#404040"/><rect x="3" y="8" width="1" height="1" fill="#fff"/><rect x="4" y="8" width="1" height="1" fill="#fff"/><rect x="5" y="8" width="1" height="1" fill="#fff"/><rect x="6" y="8" width="1" height="1" fill="#fff"/><rect x="7" y="8" width="1" height="1" fill="#fff"/><rect x="8" y="8" width="1" height="1" fill="#fff"/><rect x="9" y="8" width="1" height="1" fill="#d4d0c8"/><rect x="10" y="8" width="1" height="1" fill="#fff"/><rect x="1" y="9" width="1" height="1" fill="#808080"/><rect x="2" y="9" width="1" height="1" fill="#d4d0c8"/><rect x="3" y="9" width="1" height="1" fill="#d4d0c8"/><rect x="4" y="9" width="1" height="1" fill="#fff"/><rect x="5" y="9" width="1" height="1" fill="#fff"/><rect x="6" y="9" width="1" height="1" fill="#fff"/><rect x="7" y="9" width="1" height="1" fill="#fff"/><rect x="8" y="9" width="1" height="1" fill="#d4d0c8"/><rect x="9" y="9" width="1" height="1" fill="#d4d0c8"/><rect x="10" y="9" width="1" height="1" fill="#fff"/><rect x="2" y="10" width="1" height="1" fill="#fff"/><rect x="3" y="10" width="1" height="1" fill="#fff"/><rect x="4" y="10" width="1" height="1" fill="#d4d0c8"/><rect x="5" y="10" width="1" height="1" fill="#d4d0c8"/><rect x="6" y="10" width="1" height="1" fill="#d4d0c8"/><rect x="7" y="10" width="1" height="1" fill="#d4d0c8"/><rect x="8" y="10" width="1" height="1" fill="#fff"/><rect x="9" y="10" width="1" height="1" fill="#fff"/><rect x="4" y="11" width="1" height="1" fill="#fff"/><rect x="5" y="11" width="1" height="1" fill="#fff"/><rect x="6" y="11" width="1" height="1" fill="#fff"/><rect x="7" y="11" width="1" height="1" fill="#fff"/></svg>
<div class="t" style="left:411px;top:507px;font-size:10.5px;">Graphics Unit</div>
<div class="a sunken" style="left:512px;top:506px;width:248px;height:21px"></div>
<div class="dd" style="left:741px;top:508px;width:17px;height:17px"></div>
<div class="t" style="left:516px;top:511px;font-size:10.5px;">Millimeter</div>
<div class="a raised" style="left:450px;top:571px;width:92px;height:26px"></div>
<div class="t" style="left:450px;top:578px;width:92px;text-align:center;font-size:10.5px;color:#808080;text-shadow:1px 1px #fff;">&lt; Back</div>
<div class="a raised" style="left:546px;top:571px;width:92px;height:26px"></div>
<div class="t" style="left:546px;top:578px;width:92px;text-align:center;font-size:10.5px;">Next &gt;</div>
<div class="a raised" style="left:642px;top:571px;width:92px;height:26px"></div>
<div class="t" style="left:642px;top:578px;width:92px;text-align:center;font-size:10.5px;color:#808080;text-shadow:1px 1px #fff;">Finish</div>
<div class="a raised" style="left:738px;top:571px;width:92px;height:26px"></div>
<div class="t" style="left:738px;top:578px;width:92px;text-align:center;font-size:10.5px;">Cancel</div>
<svg class="a" style="left:1px;top:2px" width="16" height="14" shape-rendering="crispEdges"><rect x="2" y="0" width="1" height="1" fill="#000"/><rect x="3" y="0" width="1" height="1" fill="#000"/><rect x="6" y="0" width="1" height="1" fill="#a8a8f4"/><rect x="7" y="0" width="1" height="1" fill="#a8a8f4"/><rect x="8" y="0" width="1" height="1" fill="#a8a8f4"/><rect x="10" y="0" width="1" height="1" fill="#000"/><rect x="1" y="1" width="1" height="1" fill="#000"/><rect x="2" y="1" width="1" height="1" fill="#000"/><rect x="3" y="1" width="1" height="1" fill="#a8a8f4"/><rect x="4" y="1" width="1" height="1" fill="#a8a8f4"/><rect x="5" y="1" width="1" height="1" fill="#a8a8f4"/><rect x="6" y="1" width="1" height="1" fill="#a8a8f4"/><rect x="7" y="1" width="1" height="1" fill="#a8a8f4"/><rect x="8" y="1" width="1" height="1" fill="#a8a8f4"/><rect x="10" y="1" width="1" height="1" fill="#000"/><rect x="12" y="1" width="1" height="1" fill="#000"/><rect x="13" y="1" width="1" height="1" fill="#000"/><rect x="2" y="2" width="1" height="1" fill="#a8a8f4"/><rect x="3" y="2" width="1" height="1" fill="#a8a8f4"/><rect x="4" y="2" width="1" height="1" fill="#a8a8f4"/><rect x="5" y="2" width="1" height="1" fill="#a8a8f4"/><rect x="6" y="2" width="1" height="1" fill="#a8a8f4"/><rect x="7" y="2" width="1" height="1" fill="#a8a8f4"/><rect x="8" y="2" width="1" height="1" fill="#a8a8f4"/><rect x="9" y="2" width="1" height="1" fill="#a8a8f4"/><rect x="10" y="2" width="1" height="1" fill="#fff"/><rect x="11" y="2" width="1" height="1" fill="#000"/><rect x="12" y="2" width="1" height="1" fill="#000"/><rect x="13" y="2" width="1" height="1" fill="#000"/><rect x="14" y="2" width="1" height="1" fill="#000"/><rect x="2" y="3" width="1" height="1" fill="#a8a8f4"/><rect x="3" y="3" width="1" height="1" fill="#a8a8f4"/><rect x="4" y="3" width="1" height="1" fill="#a8a8f4"/><rect x="5" y="3" width="1" height="1" fill="#a8a8f4"/><rect x="6" y="3" width="1" height="1" fill="#000"/><rect x="7" y="3" width="1" height="1" fill="#000"/><rect x="8" y="3" width="1" height="1" fill="#000"/><rect x="9" y="3" width="1" height="1" fill="#3a3a90"/><rect x="10" y="3" width="1" height="1" fill="#a8a8f4"/><rect x="11" y="3" width="1" height="1" fill="#fff"/><rect x="12" y="3" width="1" height="1" fill="#fff"/><rect x="13" y="3" width="1" height="1" fill="#000"/><rect x="14" y="3" width="1" height="1" fill="#000"/><rect x="2" y="4" width="1" height="1" fill="#a8a8f4"/><rect x="3" y="4" width="1" height="1" fill="#a8a8f4"/><rect x="4" y="4" width="1" height="1" fill="#a8a8f4"/><rect x="5" y="4" width="1" height="1" fill="#a8a8f4"/><rect x="6" y="4" width="1" height="1" fill="#a8a8f4"/><rect x="7" y="4" width="1" height="1" fill="#a8a8f4"/><rect x="8" y="4" width="1" height="1" fill="#a8a8f4"/><rect x="9" y="4" width="1" height="1" fill="#a8a8f4"/><rect x="10" y="4" width="1" height="1" fill="#a8a8f4"/><rect x="11" y="4" width="1" height="1" fill="#fff"/><rect x="12" y="4" width="1" height="1" fill="#f0e000"/><rect x="14" y="4" width="1" height="1" fill="#ff6010"/><rect x="2" y="5" width="1" height="1" fill="#3a3a90"/><rect x="3" y="5" width="1" height="1" fill="#a8a8f4"/><rect x="4" y="5" width="1" height="1" fill="#a8a8f4"/><rect x="5" y="5" width="1" height="1" fill="#a8a8f4"/><rect x="6" y="5" width="1" height="1" fill="#a8a8f4"/><rect x="7" y="5" width="1" height="1" fill="#a8a8f4"/><rect x="8" y="5" width="1" height="1" fill="#000"/><rect x="9" y="5" width="1" height="1" fill="#000"/><rect x="10" y="5" width="1" height="1" fill="#a8a8f4"/><rect x="11" y="5" width="1" height="1" fill="#fff"/><rect x="12" y="5" width="1" height="1" fill="#fff"/><rect x="13" y="5" width="1" height="1" fill="#ff6010"/><rect x="14" y="5" width="1" height="1" fill="#ff6010"/><rect x="2" y="6" width="1" height="1" fill="#000"/><rect x="3" y="6" width="1" height="1" fill="#a8a8f4"/><rect x="4" y="6" width="1" height="1" fill="#a8a8f4"/><rect x="5" y="6" width="1" height="1" fill="#fff"/><rect x="6" y="6" width="1" height="1" fill="#a8a8f4"/><rect x="7" y="6" width="1" height="1" fill="#a8a8f4"/><rect x="8" y="6" width="1" height="1" fill="#fff"/><rect x="9" y="6" width="1" height="1" fill="#fff"/><rect x="10" y="6" width="1" height="1" fill="#fff"/><rect x="11" y="6" width="1" height="1" fill="#fff"/><rect x="12" y="6" width="1" height="1" fill="#fff"/><rect x="13" y="6" width="1" height="1" fill="#000"/><rect x="2" y="7" width="1" height="1" fill="#000"/><rect x="3" y="7" width="1" height="1" fill="#fff"/><rect x="4" y="7" width="1" height="1" fill="#fff"/><rect x="5" y="7" width="1" height="1" fill="#000"/><rect x="6" y="7" width="1" height="1" fill="#000"/><rect x="7" y="7" width="1" height="1" fill="#fff"/><rect x="8" y="7" width="1" height="1" fill="#000"/><rect x="9" y="7" width="1" height="1" fill="#fff"/><rect x="10" y="7" width="1" height="1" fill="#fff"/><rect x="11" y="7" width="1" height="1" fill="#fff"/><rect x="12" y="7" width="1" height="1" fill="#fff"/><rect x="13" y="7" width="1" height="1" fill="#fff"/><rect x="2" y="8" width="1" height="1" fill="#000"/><rect x="3" y="8" width="1" height="1" fill="#fff"/><rect x="4" y="8" width="1" height="1" fill="#000"/><rect x="5" y="8" width="1" height="1" fill="#fff"/><rect x="6" y="8" width="1" height="1" fill="#fff"/><rect x="7" y="8" width="1" height="1" fill="#000"/><rect x="8" y="8" width="1" height="1" fill="#000"/><rect x="9" y="8" width="1" height="1" fill="#fff"/><rect x="10" y="8" width="1" height="1" fill="#f0e000"/><rect x="11" y="8" width="1" height="1" fill="#3a3a90"/><rect x="12" y="8" width="1" height="1" fill="#fff"/><rect x="13" y="8" width="1" height="1" fill="#fff"/><rect x="2" y="9" width="1" height="1" fill="#000"/><rect x="3" y="9" width="1" height="1" fill="#fff"/><rect x="4" y="9" width="1" height="1" fill="#fff"/><rect x="5" y="9" width="1" height="1" fill="#000"/><rect x="6" y="9" width="1" height="1" fill="#fff"/><rect x="7" y="9" width="1" height="1" fill="#fff"/><rect x="8" y="9" width="1" height="1" fill="#000"/><rect x="9" y="9" width="1" height="1" fill="#fff"/><rect x="10" y="9" width="1" height="1" fill="#3a3a90"/><rect x="11" y="9" width="1" height="1" fill="#3a3a90"/><rect x="12" y="9" width="1" height="1" fill="#fff"/><rect x="13" y="9" width="1" height="1" fill="#fff"/><rect x="2" y="10" width="1" height="1" fill="#000"/><rect x="3" y="10" width="1" height="1" fill="#fff"/><rect x="4" y="10" width="1" height="1" fill="#fff"/><rect x="5" y="10" width="1" height="1" fill="#fff"/><rect x="6" y="10" width="1" height="1" fill="#000"/><rect x="7" y="10" width="1" height="1" fill="#fff"/><rect x="8" y="10" width="1" height="1" fill="#000"/><rect x="9" y="10" width="1" height="1" fill="#fff"/><rect x="10" y="10" width="1" height="1" fill="#3a3a90"/><rect x="11" y="10" width="1" height="1" fill="#3a3a90"/><rect x="12" y="10" width="1" height="1" fill="#fff"/><rect x="13" y="10" width="1" height="1" fill="#fff"/><rect x="2" y="11" width="1" height="1" fill="#000"/><rect x="3" y="11" width="1" height="1" fill="#fff"/><rect x="4" y="11" width="1" height="1" fill="#000"/><rect x="5" y="11" width="1" height="1" fill="#000"/><rect x="6" y="11" width="1" height="1" fill="#fff"/><rect x="7" y="11" width="1" height="1" fill="#fff"/><rect x="8" y="11" width="1" height="1" fill="#000"/><rect x="9" y="11" width="1" height="1" fill="#fff"/><rect x="10" y="11" width="1" height="1" fill="#fff"/><rect x="11" y="11" width="1" height="1" fill="#fff"/><rect x="12" y="11" width="1" height="1" fill="#fff"/><rect x="13" y="11" width="1" height="1" fill="#ff6010"/><rect x="2" y="12" width="1" height="1" fill="#000"/><rect x="3" y="12" width="1" height="1" fill="#000"/><rect x="4" y="12" width="1" height="1" fill="#000"/><rect x="5" y="12" width="1" height="1" fill="#000"/><rect x="6" y="12" width="1" height="1" fill="#fff"/><rect x="7" y="12" width="1" height="1" fill="#000"/><rect x="8" y="12" width="1" height="1" fill="#000"/><rect x="9" y="12" width="1" height="1" fill="#000"/><rect x="10" y="12" width="1" height="1" fill="#000"/><rect x="11" y="12" width="1" height="1" fill="#000"/><rect x="12" y="12" width="1" height="1" fill="#ff6010"/><rect x="13" y="12" width="1" height="1" fill="#ff6010"/><rect x="11" y="13" width="1" height="1" fill="#000"/><rect x="12" y="13" width="1" height="1" fill="#000"/></svg>
<svg class="a" style="left:11px;top:50px;" width="16" height="16" viewBox="0 0 16 16"><path d="M4.5 2.5h6l3 3v9h-9z" fill="url(#gnew)" stroke="#5a6aa8"/><defs><linearGradient id="gnew" x1="0" y1="0" x2="1" y2="1"><stop offset="0" stop-color="#fff"/><stop offset="1" stop-color="#9cc8f0"/></linearGradient></defs><path d="M10.5 2.5v3h3" fill="#cde" stroke="#5a6aa8"/><circle cx="4" cy="4" r="3" fill="#fcd76a"/><path d="M4 0v8M0 4h8M1.5 1.5l5 5M6.5 1.5l-5 5" stroke="#f6b820" stroke-width="0.8"/></svg>
<svg class="a" style="left:34px;top:50px;" width="16" height="16" viewBox="0 0 16 16"><path d="M1.5 6.5h4l1 1h5v7h-10z" fill="#f0d060" stroke="#c8a030"/><path d="M1.5 15.5l3-6h11l-3 6z" fill="#fbe9a0" stroke="#d0a838"/><path d="M7 3c3-3 6-2 7 2" stroke="#129a12" stroke-width="2.2" fill="none"/><path d="M11 4h5l-3 4z" fill="#22b022"/></svg>
<svg class="a" style="left:58px;top:51px;" width="16" height="14" viewBox="0 0 16 14"><path d="M1 0h14v14h-14z" fill="#c4c0ba"/><rect x="4" y="1" width="8" height="5" fill="#f4f2ee"/><path d="M5 2.5h6M5 4.5h6" stroke="#b8b4ae"/><rect x="5" y="9" width="6" height="5" fill="#f4f2ee"/><rect x="7" y="10" width="2" height="3" fill="#a09c96"/></svg>
<svg class="a" style="left:81px;top:50px;" width="16" height="16" viewBox="0 0 16 16"><path d="M5 0h11v12h-11z" fill="#c4c0ba"/><path d="M3 2h11v12h-11z" fill="#bcb8b2" stroke="#f4f2ee" stroke-width="0.5"/><path d="M1 4h12v12h-12z" fill="#c4c0ba"/><rect x="3.5" y="5" width="7" height="4.5" fill="#f4f2ee"/><path d="M4.5 6.5h5M4.5 8h5" stroke="#b8b4ae"/><rect x="4" y="12" width="6" height="4" fill="#f4f2ee"/></svg>
<svg class="a" style="left:112px;top:51px;" width="13" height="14" viewBox="0 0 13 14"><path d="M3 0l5 9M10 0l-5 9" stroke="#a4a09a" stroke-width="1.3"/><circle cx="3.5" cy="11" r="2.3" fill="none" stroke="#a4a09a" stroke-width="1.3"/><circle cx="9.5" cy="11" r="2.3" fill="none" stroke="#a4a09a" stroke-width="1.3"/></svg>
<svg class="a" style="left:135px;top:50px;" width="15" height="16" viewBox="0 0 15 16"><path d="M0.5 0.5h5l2 2v8h-7z" fill="#f4f2ee" stroke="#bcb8b2"/><path d="M5.5 4.5h6l3 3v8h-9z" fill="#f4f2ee" stroke="#bcb8b2"/><path d="M7 9h6M7 11h6M7 13h6" stroke="#c8c4be"/></svg>
<svg class="a" style="left:158px;top:51px;" width="15" height="15" viewBox="0 0 15 15"><path d="M0.5 2.5h9v12h-9z" fill="#d8d4ce" stroke="#bcb8b2"/><rect x="3" y="0.5" width="4" height="3" fill="#e8e6e2" stroke="#bcb8b2"/><path d="M5.5 5.5h6l3 3v6h-9z" fill="#f4f2ee" stroke="#bcb8b2"/><path d="M7 10h6M7 12h6" stroke="#c8c4be"/></svg>
<svg class="a" style="left:180px;top:52px;" width="15" height="13" viewBox="0 0 15 13"><path d="M1 1l13 11M14 1l-13 11" stroke="#a8a49e" stroke-width="1.8"/></svg>
<svg class="a" style="left:210px;top:51px;" width="16" height="14" viewBox="0 0 16 14"><path d="M4 5c4-4 11-3 10 3c-1 4-4 5-6 6" stroke="#a4a09a" stroke-width="2.6" fill="none"/><path d="M0 2v8h8z" fill="#a4a09a"/></svg>
<svg class="a" style="left:234px;top:51px;" width="16" height="14" viewBox="0 0 16 14"><path d="M12 5c-4-4-11-3-10 3c1 4 4 5 6 6" stroke="#a4a09a" stroke-width="2.6" fill="none"/><path d="M16 2v8h-8z" fill="#a4a09a"/></svg>
<svg class="a" style="left:263px;top:51px;" width="16" height="15" viewBox="0 0 16 15"><circle cx="10" cy="5.5" r="5" fill="#f4f2ee" stroke="#c4c0ba" stroke-width="1.2"/><path d="M6.5 9l-5.5 5.5" stroke="#b4b0aa" stroke-width="1.8"/></svg>
<svg class="a" style="left:286px;top:51px;" width="16" height="15" viewBox="0 0 16 15"><circle cx="6" cy="9" r="3" fill="#f4f2ee" stroke="#c4c0ba" stroke-width="1.2"/><path d="M4 11l-3.5 3.5" stroke="#b4b0aa" stroke-width="1.5"/><path d="M10 1h4l-4 4h4M8 6l5-5" stroke="#aca8a2" stroke-width="1"/></svg>
<svg class="a" style="left:308px;top:50px;" width="16" height="16" viewBox="0 0 16 16"><text x="0" y="12" font-size="12" font-family="Liberation Sans" font-weight="bold" fill="#b8b4ae">a</text><path d="M9 1h4v5h-4M9 1v5M13 4h-4" stroke="#b8b4ae" stroke-width="1.2" fill="none"/><path d="M8 9h7M10 11h4M9 13l3 3" stroke="#b8b4ae" stroke-width="1"/></svg>
<svg class="a" style="left:339px;top:52px;" width="15" height="14" viewBox="0 0 15 14" shape-rendering="crispEdges"><rect x="2" y="0" width="4" height="1" fill="#404040"/><rect x="6" y="1" width="9" height="1" fill="#404040"/><rect x="5" y="5" width="10" height="1" fill="#a0a0a0"/><rect x="6" y="8" width="9" height="1" fill="#a0a0a0"/><rect x="2" y="12" width="13" height="1" fill="#404040"/><rect x="5" y="4" width="10" height="1" fill="#606060"/></svg>
<svg class="a" style="left:368px;top:50px;" width="16" height="16" viewBox="0 0 16 16"><path d="M8 0.8l2.1 4.6 5 .5-3.8 3.4 1.1 5-4.4-2.6-4.4 2.6 1.1-5-3.8-3.4 5-.5z" fill="#ecebe8" stroke="#bdb9b3" stroke-width="1"/></svg>
<svg class="a" style="left:391px;top:50px;" width="16" height="16" viewBox="0 0 16 16"><path d="M8 0.8l2.1 4.6 5 .5-3.8 3.4 1.1 5-4.4-2.6-4.4 2.6 1.1-5-3.8-3.4 5-.5z" fill="#ecebe8" stroke="#bdb9b3" stroke-width="1"/><path d="M1 1h4M1 1v3M3 2l3 3" stroke="#8c8882" stroke-width="1.2"/></svg>
<svg class="a" style="left:414px;top:50px;" width="16" height="16" viewBox="0 0 16 16"><path d="M8 0.8l2.1 4.6 5 .5-3.8 3.4 1.1 5-4.4-2.6-4.4 2.6 1.1-5-3.8-3.4 5-.5z" fill="#ecebe8" stroke="#bdb9b3" stroke-width="1"/><path d="M1 2h3l2 2" stroke="#8c8882" stroke-width="1.3" fill="none"/></svg>
<svg class="a" style="left:437px;top:50px;" width="16" height="16" viewBox="0 0 16 16"><path d="M8 0.8l2.1 4.6 5 .5-3.8 3.4 1.1 5-4.4-2.6-4.4 2.6 1.1-5-3.8-3.4 5-.5z" fill="#ecebe8" stroke="#bdb9b3" stroke-width="1"/><text x="0" y="6" font-size="6" font-family="Liberation Sans" font-weight="bold" fill="#8c8882">30</text></svg>
<svg class="a" style="left:858px;top:50px;" width="16" height="16" viewBox="0 0 16 16"><path d="M8 0.8l2.1 4.6 5 .5-3.8 3.4 1.1 5-4.4-2.6-4.4 2.6 1.1-5-3.8-3.4 5-.5z" fill="#ecebe8" stroke="#bdb9b3" stroke-width="1"/><text x="0" y="6" font-size="6" font-family="Liberation Sans" font-weight="bold" fill="#8c8882">30</text></svg>
<svg class="a" style="left:468px;top:51px;" width="16" height="14" viewBox="0 0 16 14"><rect x="0.5" y="7.5" width="15" height="6" fill="#f4f2ee" stroke="#b4b0aa"/><path d="M2 9.5h12M2 11.5h12" stroke="#c4c0ba" stroke-dasharray="1 1"/><path d="M3 2v4M8 2v4M13 2v4" stroke="#a8a49e" stroke-width="2"/><path d="M1 5l2 2 2-2M6 5l2 2 2-2M11 5l2 2 2-2" stroke="#a8a49e" fill="none"/></svg>
<svg class="a" style="left:491px;top:51px;" width="16" height="14" viewBox="0 0 16 14"><rect x="0.5" y="7.5" width="15" height="6" fill="#f4f2ee" stroke="#b4b0aa"/><path d="M2 9.5h12M2 11.5h12" stroke="#c4c0ba" stroke-dasharray="1 1"/><path d="M3 2v4M8 2v4M13 2v4" stroke="#a8a49e" stroke-width="2"/><path d="M1 5l2 2 2-2M6 5l2 2 2-2M11 5l2 2 2-2" stroke="#a8a49e" fill="none"/></svg>
<svg class="a" style="left:516px;top:52px;" width="12" height="13" viewBox="0 0 12 13"><path d="M1 0.5l10 6-10 6z" fill="#9a968f"/></svg>
<svg class="a" style="left:537px;top:50px;" width="16" height="16" viewBox="0 0 16 16"><rect x="0.5" y="0.5" width="15" height="15" rx="2" fill="#c4c0ba" stroke="#f0eeea"/><circle cx="8" cy="8" r="4.5" fill="none" stroke="#f4f2ee" stroke-width="1.5"/><rect x="7" y="5" width="2" height="6" fill="#f4f2ee"/></svg>
<svg class="a" style="left:713px;top:54px;" width="15" height="10" viewBox="0 0 15 10"><path d="M1 5l5-4.5v2.5h7.5v4h-7.5v2.5z" fill="#f0eeea" stroke="#908c86" stroke-width="1"/></svg>
<svg class="a" style="left:736px;top:54px;" width="15" height="10" viewBox="0 0 15 10"><path d="M14 5l-5-4.5v2.5h-7.5v4h7.5v2.5z" fill="#f0eeea" stroke="#908c86" stroke-width="1"/></svg>
<svg class="a" style="left:759px;top:51px;" width="14" height="16" viewBox="0 0 14 16"><path d="M0.5 0.5h9l3.5 3.5v11.5h-12.5z" fill="#f0eeea" stroke="#c8c4be"/><path d="M4 6l5 5M9 6l-5 5" stroke="#b0aca6" stroke-width="1.6"/></svg>
<svg class="a" style="left:783px;top:51px;" width="14" height="16" viewBox="0 0 14 16"><path d="M0.5 0.5h9l3.5 3.5v11.5h-12.5z" fill="#f0eeea" stroke="#c8c4be"/><path d="M3.5 7c1-3 5-3 6 0M9.5 10c-1 3-5 3-6 0" stroke="#a8a49e" stroke-width="1.5" fill="none"/><path d="M8 6h3v-3M5 11h-3v3" stroke="#a8a49e" fill="none"/></svg>
<svg class="a" style="left:806px;top:50px;" width="16" height="16" viewBox="0 0 16 16"><path d="M1 7l7-6 7 6v2l-7-6-7 6z" fill="#6e6ee0" stroke="#303090" stroke-width="0.8"/><path d="M2.5 7.5l5.5-4.5 5.5 4.5v7.5h-11z" fill="#fff" stroke="#3a3a8a" stroke-width="1"/><rect x="8" y="9" width="3" height="6" fill="#2a4aa0"/><path d="M3 2h3l-1 2" fill="#8080f0"/></svg>
<svg class="a" style="left:834px;top:50px;" width="17" height="17" viewBox="0 0 17 17"><circle cx="8.5" cy="8.5" r="7.5" fill="#c8e0f0" stroke="#606870" stroke-width="1.2"/><circle cx="8.5" cy="8.5" r="5.5" fill="#e8f0f8"/><path d="M3 10c1-4 5-6 9-4" stroke="#20a020" stroke-width="2.8" fill="none"/><path d="M2 8l2 5 4-3z" fill="#20a020"/><path d="M9 5l4-2" stroke="#203080" stroke-width="1"/><circle cx="12" cy="12" r="1" fill="#f44"/></svg>
<svg class="a" style="left:890px;top:54px;" width="15" height="12" viewBox="0 0 15 12" shape-rendering="crispEdges"><rect x="0" y="0" width="15" height="12" fill="#606060"/><rect x="1" y="2" width="13" height="9" fill="#f4f0f0"/><path d="M14 4l-10 7h10z" fill="#d8d4d0"/></svg>
<svg class="a" style="left:911px;top:56px;" width="16" height="9" viewBox="0 0 16 9"><path d="M0.5 4.5l4-4v2h7v-2l4 4-4 4v-2h-7v2z" fill="#f0eeea" stroke="#908c86"/></svg>
<svg class="a" style="left:935px;top:52px;" width="12" height="13" viewBox="0 0 12 13"><path d="M6 0.5l5.5 5.5h-3v6.5h-5v-6.5h-3z" fill="#f0eeea" stroke="#908c86"/></svg>
<svg class="a" style="left:958px;top:52px;" width="12" height="13" viewBox="0 0 12 13"><path d="M6 12.5l5.5-5.5h-3v-6.5h-5v6.5h-3z" fill="#f0eeea" stroke="#908c86"/></svg>
<svg class="a" style="left:986px;top:50px;" width="17" height="15" viewBox="0 0 17 15"><path d="M1 14h5M10 14h5M3 14l5-12 5 12M5 9h6" stroke="#808080" stroke-width="1.2" fill="none"/><path d="M1 14.5h14" stroke="#808080"/><path d="M14 3l2-2 2 2M14 5l2 2 2-2" stroke="#606060" fill="none" stroke-width="0.8"/></svg>
<svg class="a" style="left:196px;top:370px" width="200" height="140" viewBox="0 0 1024 717">
<defs><linearGradient id="hs" x1="0" y1="0" x2="0" y2="1"><stop offset="0.45" stop-color="#fff"/><stop offset="0.55" stop-color="#b8b7bd"/></linearGradient></defs>
<g stroke="#1a1816" stroke-width="8" stroke-linejoin="round" stroke-linecap="round">
<path d="M426 531 C405 565 390 590 384 606 C380 625 382 640 395 648 C420 655 445 650 460 640 C480 620 490 600 496 568 C480 550 450 535 426 531 Z" fill="#fdb50e"/>
<path d="M263 197 C300 160 360 125 420 115 C480 110 540 125 600 160 C680 200 740 260 752 330 C760 400 760 450 745 480 C720 520 680 560 620 580 C560 600 480 560 426 527 C380 505 340 490 300 470 C260 440 250 400 250 360 C248 300 250 230 263 197 Z" fill="#ee7f1f"/>
<path d="M565 150 C590 120 650 110 700 140 C745 170 760 210 740 250 C730 270 728 285 728 292 L603 262 Z" fill="#fdb50e" stroke="none"/>
<path d="M603 262 L565 150 C590 120 650 110 700 140 C745 170 760 210 740 250 C730 270 728 285 728 292" fill="none"/>
<path d="M803 253 C830 240 880 235 920 260 C950 290 950 340 945 380 C940 420 945 460 920 490 C890 510 850 500 812 485 Z" fill="#fdc900"/>
<path d="M733 295 L798 272 C800 340 805 420 808 485 L752 475 C745 400 740 340 733 295 Z" fill="#ffffff"/>
<path d="M366 113 C400 70 430 43 450 43 C485 48 510 90 520 127 L533 141 L533 276 L505 276 C500 220 480 180 460 160 Z" fill="#fdb50e"/>
<path d="M520 127 C540 135 560 145 565 150 L603 262 C590 268 560 275 533 276 C530 230 525 170 520 127 Z" fill="#ffffff"/>
<path d="M603 262 L728 292 L733 295 C740 340 745 400 752 475 C700 470 660 461 626 461 C660 430 680 380 677 337 C670 300 640 280 603 262 Z" fill="#fdb50e" stroke="none"/>
<path d="M560 559 C600 520 630 470 672 461 C710 462 742 470 760 490 C778 512 775 540 765 550 C730 575 700 590 672 592 C640 595 600 585 560 559 Z" fill="#fdb50e"/>
<path d="M590 540 C630 490 670 466 745 478 C700 492 650 515 590 540 Z" fill="#ee7f1f" stroke="none"/>
<path d="M570 466 L617 466 C605 500 590 530 579 550 L542 545 C552 520 562 490 570 466 Z" fill="#b8b7bd"/>
<path d="M459 536 C500 545 540 555 571 568 C580 580 585 595 583 606 C570 610 550 605 529 587 C500 570 480 555 459 536 Z" fill="#fdb50e"/>
<path d="M291 164 C330 140 370 130 403 132 C440 140 475 160 487 188 C505 220 512 250 510 272 C512 320 505 370 491 419 C480 440 460 452 412 461 C395 458 385 448 384 438 C400 430 440 420 450 400 C462 370 475 330 475 307 C472 270 460 240 440 215 C420 195 390 183 360 180 C330 178 300 185 263 197 Z" fill="url(#hs)"/>
<path d="M263 197 C290 180 340 165 384 183 C420 195 455 225 465 260 C478 300 475 340 460 368 C450 400 420 425 389 433 C370 440 340 445 320 440 C300 420 280 400 265 380 C255 340 252 260 263 197 Z" fill="#ee7f1f"/>
<path d="M266 200 C290 183 340 170 384 186 C410 196 430 215 440 240 C420 250 400 262 395 285 C400 300 405 310 407 312 C380 330 320 345 254 352 C250 300 254 240 266 200 Z" fill="#fdb50e" stroke="none"/>
<path d="M252 352 C320 348 380 335 408 310 C420 330 405 355 385 363 C340 370 290 370 262 368 Z" fill="#fdc900" stroke="none"/>
<path d="M254 352 C320 348 380 335 408 310" fill="none" stroke-width="5"/>
<path d="M263 197 C290 180 340 165 384 183 C420 195 455 225 465 260 C478 300 475 340 460 368 C450 400 420 425 389 433" fill="none" stroke-width="10"/>
<ellipse cx="405" cy="241" rx="13" ry="19" fill="#1a1816" stroke="#ffd200" stroke-width="6"/>
<circle cx="399" cy="231" r="4" fill="#fff" stroke="none"/>
<path d="M533 276 C560 262 610 265 649 290 C672 310 680 340 677 354 C675 390 668 424 626 461 C600 470 570 466 560 460 C545 450 535 440 530 438 C540 400 545 330 533 276 Z" fill="#ee7f1f"/>
<path d="M277 419 C310 430 340 440 361 447 C365 460 355 470 342 470 C320 465 300 455 291 447 Z" fill="#b8b7bd"/>
<path d="M158 354 C190 335 220 328 240 326 C255 360 270 400 300 430 C320 450 340 480 347 494 C330 515 310 527 300 527 C270 520 250 510 230 503 C200 480 180 460 170 447 C160 420 155 380 158 354 Z" fill="#ee7f1f" stroke-width="6"/>
<path d="M160 365 C200 370 235 395 240 430 C238 460 225 480 215 490 C190 470 175 450 168 430 C160 400 158 380 160 365 Z" fill="#fdb50e" stroke-width="6"/>
<path d="M72 100 L245 555" stroke="#555" stroke-width="12" fill="none"/>
<path d="M62 38 L72 62 L98 65 L80 82 L88 108 L64 96 L42 110 L46 84 L24 70 L52 62 Z" fill="#fff" stroke="#444" stroke-width="5"/>
</g>
</svg>
<svg class="a" style="left:6px;top:115px;" width="15" height="16" viewBox="0 0 15 16" shape-rendering="crispEdges"><rect x="0" y="0" width="7" height="7" fill="#fff" stroke="#808080"/><rect x="0.5" y="0.5" width="6" height="6" fill="#d4d0c8" stroke="#808080"/><path d="M2 3.5h3M3.5 2v3" stroke="#000"/><rect x="0.5" y="9.5" width="6" height="6" fill="#fff" stroke="#808080"/><path d="M2 12.5h3M3.5 11v3" stroke="#000"/><path d="M3.5 7v2" stroke="#808080"/><rect x="8" y="2" width="4" height="1" fill="#000"/><rect x="8" y="4" width="6" height="1" fill="#a0a0a0"/><rect x="8" y="6" width="6" height="1" fill="#a0a0a0"/><rect x="8" y="8" width="6" height="1" fill="#a0a0a0"/><rect x="8" y="12" width="4" height="1" fill="#000"/><rect x="8" y="14" width="6" height="1" fill="#a0a0a0"/></svg>
<svg class="a" style="left:29px;top:113px;" width="16" height="17" viewBox="0 0 16 17"><text x="0" y="8" font-size="9" font-weight="bold" font-family="Liberation Sans" fill="#000">A</text><text x="0.5" y="16" font-size="9" font-weight="bold" font-family="Liberation Sans" fill="#000">Z</text><path d="M10.5 1v2M10.5 4v2M10.5 7v5" stroke="#000080" stroke-width="1.3"/><path d="M7.5 11h6l-3 5z" fill="#000080"/></svg>
<svg class="a" style="left:57px;top:116px;" width="15" height="13" viewBox="0 0 15 13" shape-rendering="crispEdges"><rect x="0" y="0" width="15" height="13" fill="#808080"/><rect x="1" y="2" width="13" height="10" fill="#d4d0c8"/><rect x="1" y="11" width="13" height="1" fill="#fff"/><path d="M3 6h4v4h-4zM7 5h6v5h-6z" fill="none" stroke="#808080"/></svg>
<svg class="a" style="left:7px;top:701px;" width="17" height="17" viewBox="0 0 17 17"><rect x="0.5" y="1.5" width="14" height="11" fill="#fff" stroke="#3a6ab8"/><rect x="1" y="2" width="13" height="2" fill="#7aa8e8"/><path d="M6 8h9v8h-9z" fill="#c8884a" stroke="#7a4a20" stroke-width="0.8"/><circle cx="10" cy="8" r="2" fill="#d02020"/></svg>
<svg class="a" style="left:57px;top:700px;" width="17" height="18" viewBox="0 0 17 18"><path d="M4 1l4 4-4 4-4-4z" fill="#f0e020" stroke="#808000" stroke-width="0.5"/><path d="M12 5l4 4-4 4-4-4z" fill="#e020e0" stroke="#800080" stroke-width="0.5"/><path d="M10 11l4 4-4 3-4-3z" fill="#20d0d0" stroke="#008080" stroke-width="0.5"/><path d="M6 7l2 5" stroke="#404040"/></svg>
<svg class="a" style="left:107px;top:700px;" width="16" height="17" viewBox="0 0 16 17"><rect x="0.5" y="1.5" width="15" height="15" fill="#3a78d0" stroke="#1a3a80"/><rect x="3" y="4" width="2" height="12" fill="#e0e0e0"/><rect x="7" y="4" width="3" height="12" fill="#f06020"/><rect x="11" y="4" width="2" height="12" fill="#c0c0c0"/><path d="M2 4h12" stroke="#fff"/></svg>
<svg class="a" style="left:156px;top:700px;" width="17" height="17" viewBox="0 0 17 17"><rect x="0.5" y="6.5" width="13" height="10" fill="#fff" stroke="#3a6ab8"/><path d="M3 10h8M3 12h8M3 14h8" stroke="#3a6ab8"/><path d="M3 6l6-5 7 3-5 5z" fill="#e8c060" stroke="#806020" stroke-width="0.8"/></svg>
<svg class="a" style="left:216px;top:701px;" width="16" height="14" viewBox="0 0 16 14"><rect x="0.5" y="0.5" width="15" height="13" fill="#fff" stroke="#2a5ac8"/><rect x="1" y="1" width="14" height="2" fill="#4a8ae8"/><path d="M3 6h10M3 8h10M3 10h6" stroke="#909090"/><path d="M6 12l9-4" stroke="#e03020" stroke-width="1.5"/><path d="M5 12l2-1" stroke="#f0c040" stroke-width="1.5"/></svg>
<svg class="a" style="left:286px;top:701px;" width="16" height="14" viewBox="0 0 16 14"><rect x="0.5" y="0.5" width="15" height="13" fill="#fff" stroke="#2a5ac8"/><rect x="1" y="1" width="14" height="2" fill="#4a8ae8"/><rect x="2" y="4" width="3" height="8" fill="#4a8ae8"/><path d="M7 5.5h6M7 8h6M7 10.5h6" stroke="#2a5ac8"/></svg>
<svg class="a" style="left:347px;top:701px;" width="16" height="14" viewBox="0 0 16 14" shape-rendering="crispEdges"><rect x="0" y="0" width="16" height="14" fill="#2a4a9a"/><rect x="1" y="2" width="14" height="11" fill="#000"/><text x="1.5" y="11" font-size="8" font-weight="bold" font-family="Liberation Sans" fill="#fff">C:\</text></svg>
<svg class="a" style="left:6px;top:748px;" width="17" height="15" viewBox="0 0 17 15"><path d="M1 2h1M1 5h1M1 8h1M1 11h1" stroke="#000"/><path d="M2 5h3M2 8h3M2 11h3" stroke="#f00" stroke-width="1"/><path d="M3 6h3M3 9h3M3 12h3" stroke="#00f"/><path d="M5 3c3-2 6-2 11 0v12c-5-2-8-2-11 0z" fill="#000"/><path d="M7 4.5c1-0.5 2-0.5 3-0.2v4c-1-0.3-2-0.3-3 0.2z" fill="#f00"/><path d="M11 4.3c1 0 2 0.3 3 0.6v4c-1-0.3-2-0.6-3-0.6z" fill="#0c0"/><path d="M7 9.5c1-0.5 2-0.5 3-0.2v4c-1-0.3-2-0.3-3 0.2z" fill="#00f"/><path d="M11 9.3c1 0 2 0.3 3 0.6v4c-1-0.3-2-0.6-3-0.6z" fill="#ff0"/></svg>
<svg class="a" style="left:74px;top:747px;" width="16" height="16" viewBox="0 0 16 16"><rect x="0" y="0" width="16" height="16" fill="#1a8ad8"/><path d="M0 0h3v3zM16 0h-3v3zM0 16h3v-3zM16 16h-3v-3z" fill="#9cd"/><ellipse cx="8" cy="8" rx="7" ry="6" fill="#f0ecc8"/><rect x="4.5" y="5.5" width="6" height="7" fill="#fff" stroke="#000"/><path d="M7 9l7-8" stroke="#f0a020" stroke-width="2"/><path d="M13 1l2 1" stroke="#e02020" stroke-width="2"/></svg>
<svg class="a" style="left:97px;top:747px;" width="16" height="16" viewBox="0 0 16 16"><ellipse cx="8" cy="8" rx="8" ry="4" fill="none" stroke="#6ac0f8" stroke-width="1.3" transform="rotate(-30 8 8)"/><circle cx="8" cy="9" r="5.5" fill="#2a8ae8"/><circle cx="8" cy="9" r="3" fill="#fff"/><rect x="5" y="8" width="6" height="1.6" fill="#2a8ae8"/><rect x="8" y="10" width="5" height="2" fill="#2a8ae8"/></svg>
<svg class="a" style="left:120px;top:747px;" width="16" height="16" viewBox="0 0 16 16" shape-rendering="crispEdges"><rect x="0" y="0" width="16" height="16" fill="#808000"/><circle cx="8" cy="8" r="5.5" fill="#fff"/><circle cx="8" cy="8" r="3.8" fill="#808000"/><path d="M8 5v3h3" stroke="#fff" stroke-width="1.5" fill="none"/><path d="M0 0h3M0 0v3M16 0h-3M16 0v3M0 16h3M0 16v-3M16 16h-3M16 16v-3" stroke="#fff" stroke-width="1.5"/></svg>
<svg class="a" style="left:143px;top:747px;" width="16" height="16" viewBox="0 0 16 16"><path d="M0.5 3.5h5l1 1h8v10h-14z" fill="#f0e090" stroke="#807020"/><circle cx="6.5" cy="8.5" r="3.5" fill="#9ee8f0" stroke="#404040"/><path d="M9 11l5 4" stroke="#0030c0" stroke-width="2.2"/></svg>
<svg class="a" style="left:198px;top:747px;" width="16" height="16" viewBox="0 0 16 16" shape-rendering="crispEdges"><rect x="0" y="0" width="16" height="16" fill="#808000"/><circle cx="8" cy="8" r="5.5" fill="#fff"/><circle cx="8" cy="8" r="3.8" fill="#808000"/><path d="M8 5v3h3" stroke="#fff" stroke-width="1.5" fill="none"/><path d="M0 0h3M0 0v3M16 0h-3M16 0v3M0 16h3M0 16v-3M16 16h-3M16 16v-3" stroke="#fff" stroke-width="1.5"/></svg>
<svg class="a" style="left:322px;top:747px;" width="16" height="16" viewBox="0 0 16 16"><path d="M0.5 3.5h5l1 1h8v10h-14z" fill="#f0e090" stroke="#807020"/><circle cx="6.5" cy="8.5" r="3.5" fill="#9ee8f0" stroke="#404040"/><path d="M9 11l5 4" stroke="#0030c0" stroke-width="2.2"/></svg>
<svg class="a" style="left:446px;top:747px;" width="16" height="16" viewBox="0 0 16 16"><path d="M4.5 0.5h8l3 3v12h-11z" fill="#fff" stroke="#404040"/><circle cx="6" cy="9" r="4.5" fill="#2a7ae8"/><circle cx="6" cy="9" r="2.2" fill="#fff"/><rect x="3.5" y="8.3" width="5" height="1.3" fill="#2a7ae8"/><ellipse cx="6" cy="9" rx="6" ry="2.5" fill="none" stroke="#5ab0f8" transform="rotate(-30 6 9)"/></svg>
<svg class="a" style="left:570px;top:747px;" width="16" height="16" viewBox="0 0 16 16"><path d="M3.5 0.5h9l3 3v12h-12z" fill="#fff" stroke="#404040"/><rect x="0" y="3" width="10" height="9" fill="#1a3ab0"/><text x="0.5" y="11" font-size="9" font-weight="bold" font-family="Liberation Serif" fill="#fff">W</text></svg>
<svg class="a" style="left:693px;top:748px" width="16" height="14" shape-rendering="crispEdges"><rect x="2" y="0" width="1" height="1" fill="#000"/><rect x="3" y="0" width="1" height="1" fill="#000"/><rect x="6" y="0" width="1" height="1" fill="#a8a8f4"/><rect x="7" y="0" width="1" height="1" fill="#a8a8f4"/><rect x="8" y="0" width="1" height="1" fill="#a8a8f4"/><rect x="10" y="0" width="1" height="1" fill="#000"/><rect x="1" y="1" width="1" height="1" fill="#000"/><rect x="2" y="1" width="1" height="1" fill="#000"/><rect x="3" y="1" width="1" height="1" fill="#a8a8f4"/><rect x="4" y="1" width="1" height="1" fill="#a8a8f4"/><rect x="5" y="1" width="1" height="1" fill="#a8a8f4"/><rect x="6" y="1" width="1" height="1" fill="#a8a8f4"/><rect x="7" y="1" width="1" height="1" fill="#a8a8f4"/><rect x="8" y="1" width="1" height="1" fill="#a8a8f4"/><rect x="10" y="1" width="1" height="1" fill="#000"/><rect x="12" y="1" width="1" height="1" fill="#000"/><rect x="13" y="1" width="1" height="1" fill="#000"/><rect x="2" y="2" width="1" height="1" fill="#a8a8f4"/><rect x="3" y="2" width="1" height="1" fill="#a8a8f4"/><rect x="4" y="2" width="1" height="1" fill="#a8a8f4"/><rect x="5" y="2" width="1" height="1" fill="#a8a8f4"/><rect x="6" y="2" width="1" height="1" fill="#a8a8f4"/><rect x="7" y="2" width="1" height="1" fill="#a8a8f4"/><rect x="8" y="2" width="1" height="1" fill="#a8a8f4"/><rect x="9" y="2" width="1" height="1" fill="#a8a8f4"/><rect x="10" y="2" width="1" height="1" fill="#fff"/><rect x="11" y="2" width="1" height="1" fill="#000"/><rect x="12" y="2" width="1" height="1" fill="#000"/><rect x="13" y="2" width="1" height="1" fill="#000"/><rect x="14" y="2" width="1" height="1" fill="#000"/><rect x="2" y="3" width="1" height="1" fill="#a8a8f4"/><rect x="3" y="3" width="1" height="1" fill="#a8a8f4"/><rect x="4" y="3" width="1" height="1" fill="#a8a8f4"/><rect x="5" y="3" width="1" height="1" fill="#a8a8f4"/><rect x="6" y="3" width="1" height="1" fill="#000"/><rect x="7" y="3" width="1" height="1" fill="#000"/><rect x="8" y="3" width="1" height="1" fill="#000"/><rect x="9" y="3" width="1" height="1" fill="#3a3a90"/><rect x="10" y="3" width="1" height="1" fill="#a8a8f4"/><rect x="11" y="3" width="1" height="1" fill="#fff"/><rect x="12" y="3" width="1" height="1" fill="#fff"/><rect x="13" y="3" width="1" height="1" fill="#000"/><rect x="14" y="3" width="1" height="1" fill="#000"/><rect x="2" y="4" width="1" height="1" fill="#a8a8f4"/><rect x="3" y="4" width="1" height="1" fill="#a8a8f4"/><rect x="4" y="4" width="1" height="1" fill="#a8a8f4"/><rect x="5" y="4" width="1" height="1" fill="#a8a8f4"/><rect x="6" y="4" width="1" height="1" fill="#a8a8f4"/><rect x="7" y="4" width="1" height="1" fill="#a8a8f4"/><rect x="8" y="4" width="1" height="1" fill="#a8a8f4"/><rect x="9" y="4" width="1" height="1" fill="#a8a8f4"/><rect x="10" y="4" width="1" height="1" fill="#a8a8f4"/><rect x="11" y="4" width="1" height="1" fill="#fff"/><rect x="12" y="4" width="1" height="1" fill="#f0e000"/><rect x="14" y="4" width="1" height="1" fill="#ff6010"/><rect x="2" y="5" width="1" height="1" fill="#3a3a90"/><rect x="3" y="5" width="1" height="1" fill="#a8a8f4"/><rect x="4" y="5" width="1" height="1" fill="#a8a8f4"/><rect x="5" y="5" width="1" height="1" fill="#a8a8f4"/><rect x="6" y="5" width="1" height="1" fill="#a8a8f4"/><rect x="7" y="5" width="1" height="1" fill="#a8a8f4"/><rect x="8" y="5" width="1" height="1" fill="#000"/><rect x="9" y="5" width="1" height="1" fill="#000"/><rect x="10" y="5" width="1" height="1" fill="#a8a8f4"/><rect x="11" y="5" width="1" height="1" fill="#fff"/><rect x="12" y="5" width="1" height="1" fill="#fff"/><rect x="13" y="5" width="1" height="1" fill="#ff6010"/><rect x="14" y="5" width="1" height="1" fill="#ff6010"/><rect x="2" y="6" width="1" height="1" fill="#000"/><rect x="3" y="6" width="1" height="1" fill="#a8a8f4"/><rect x="4" y="6" width="1" height="1" fill="#a8a8f4"/><rect x="5" y="6" width="1" height="1" fill="#fff"/><rect x="6" y="6" width="1" height="1" fill="#a8a8f4"/><rect x="7" y="6" width="1" height="1" fill="#a8a8f4"/><rect x="8" y="6" width="1" height="1" fill="#fff"/><rect x="9" y="6" width="1" height="1" fill="#fff"/><rect x="10" y="6" width="1" height="1" fill="#fff"/><rect x="11" y="6" width="1" height="1" fill="#fff"/><rect x="12" y="6" width="1" height="1" fill="#fff"/><rect x="13" y="6" width="1" height="1" fill="#000"/><rect x="2" y="7" width="1" height="1" fill="#000"/><rect x="3" y="7" width="1" height="1" fill="#fff"/><rect x="4" y="7" width="1" height="1" fill="#fff"/><rect x="5" y="7" width="1" height="1" fill="#000"/><rect x="6" y="7" width="1" height="1" fill="#000"/><rect x="7" y="7" width="1" height="1" fill="#fff"/><rect x="8" y="7" width="1" height="1" fill="#000"/><rect x="9" y="7" width="1" height="1" fill="#fff"/><rect x="10" y="7" width="1" height="1" fill="#fff"/><rect x="11" y="7" width="1" height="1" fill="#fff"/><rect x="12" y="7" width="1" height="1" fill="#fff"/><rect x="13" y="7" width="1" height="1" fill="#fff"/><rect x="2" y="8" width="1" height="1" fill="#000"/><rect x="3" y="8" width="1" height="1" fill="#fff"/><rect x="4" y="8" width="1" height="1" fill="#000"/><rect x="5" y="8" width="1" height="1" fill="#fff"/><rect x="6" y="8" width="1" height="1" fill="#fff"/><rect x="7" y="8" width="1" height="1" fill="#000"/><rect x="8" y="8" width="1" height="1" fill="#000"/><rect x="9" y="8" width="1" height="1" fill="#fff"/><rect x="10" y="8" width="1" height="1" fill="#f0e000"/><rect x="11" y="8" width="1" height="1" fill="#3a3a90"/><rect x="12" y="8" width="1" height="1" fill="#fff"/><rect x="13" y="8" width="1" height="1" fill="#fff"/><rect x="2" y="9" width="1" height="1" fill="#000"/><rect x="3" y="9" width="1" height="1" fill="#fff"/><rect x="4" y="9" width="1" height="1" fill="#fff"/><rect x="5" y="9" width="1" height="1" fill="#000"/><rect x="6" y="9" width="1" height="1" fill="#fff"/><rect x="7" y="9" width="1" height="1" fill="#fff"/><rect x="8" y="9" width="1" height="1" fill="#000"/><rect x="9" y="9" width="1" height="1" fill="#fff"/><rect x="10" y="9" width="1" height="1" fill="#3a3a90"/><rect x="11" y="9" width="1" height="1" fill="#3a3a90"/><rect x="12" y="9" width="1" height="1" fill="#fff"/><rect x="13" y="9" width="1" height="1" fill="#fff"/><rect x="2" y="10" width="1" height="1" fill="#000"/><rect x="3" y="10" width="1" height="1" fill="#fff"/><rect x="4" y="10" width="1" height="1" fill="#fff"/><rect x="5" y="10" width="1" height="1" fill="#fff"/><rect x="6" y="10" width="1" height="1" fill="#000"/><rect x="7" y="10" width="1" height="1" fill="#fff"/><rect x="8" y="10" width="1" height="1" fill="#000"/><rect x="9" y="10" width="1" height="1" fill="#fff"/><rect x="10" y="10" width="1" height="1" fill="#3a3a90"/><rect x="11" y="10" width="1" height="1" fill="#3a3a90"/><rect x="12" y="10" width="1" height="1" fill="#fff"/><rect x="13" y="10" width="1" height="1" fill="#fff"/><rect x="2" y="11" width="1" height="1" fill="#000"/><rect x="3" y="11" width="1" height="1" fill="#fff"/><rect x="4" y="11" width="1" height="1" fill="#000"/><rect x="5" y="11" width="1" height="1" fill="#000"/><rect x="6" y="11" width="1" height="1" fill="#fff"/><rect x="7" y="11" width="1" height="1" fill="#fff"/><rect x="8" y="11" width="1" height="1" fill="#000"/><rect x="9" y="11" width="1" height="1" fill="#fff"/><rect x="10" y="11" width="1" height="1" fill="#fff"/><rect x="11" y="11" width="1" height="1" fill="#fff"/><rect x="12" y="11" width="1" height="1" fill="#fff"/><rect x="13" y="11" width="1" height="1" fill="#ff6010"/><rect x="2" y="12" width="1" height="1" fill="#000"/><rect x="3" y="12" width="1" height="1" fill="#000"/><rect x="4" y="12" width="1" height="1" fill="#000"/><rect x="5" y="12" width="1" height="1" fill="#000"/><rect x="6" y="12" width="1" height="1" fill="#fff"/><rect x="7" y="12" width="1" height="1" fill="#000"/><rect x="8" y="12" width="1" height="1" fill="#000"/><rect x="9" y="12" width="1" height="1" fill="#000"/><rect x="10" y="12" width="1" height="1" fill="#000"/><rect x="11" y="12" width="1" height="1" fill="#000"/><rect x="12" y="12" width="1" height="1" fill="#ff6010"/><rect x="13" y="12" width="1" height="1" fill="#ff6010"/><rect x="11" y="13" width="1" height="1" fill="#000"/><rect x="12" y="13" width="1" height="1" fill="#000"/></svg>
<svg class="a" style="left:823px;top:747px;" width="17" height="16" viewBox="0 0 17 16"><path d="M1 5h4l5-4v14l-5-4h-4z" fill="#f0e060" stroke="#404000" stroke-width="0.8"/><path d="M5 5v6" stroke="#000"/><path d="M12 5l2-2M12 8h3M12 11l2 2" stroke="#a0a0a0"/></svg>
<svg class="a" style="left:842px;top:747px;" width="16" height="16" viewBox="0 0 16 16"><rect x="0" y="0" width="16" height="16" fill="#000080"/><circle cx="8" cy="8" r="2" fill="#ff0"/><path d="M4.5 4.5a5 5 0 0 0 0 7M11.5 4.5a5 5 0 0 1 0 7M2.5 2.5a8 8 0 0 0 0 11M13.5 2.5a8 8 0 0 1 0 11" stroke="#ff0" stroke-width="1.1" fill="none"/></svg>
<svg class="a" style="left:862px;top:747px;" width="13" height="16" viewBox="0 0 13 16" shape-rendering="crispEdges"><path d="M0 1h3l5 9v-9h3v14h-3l-5-9v9h-3z" fill="#f00"/></svg>
<svg class="a" style="left:879px;top:747px;" width="15" height="16" viewBox="0 0 15 16"><path d="M1 8l7-7 6 6-7 8z" fill="#f0f020" stroke="#404000" stroke-width="0.8"/><path d="M3 9l6-6M5 11l6-6M7 13l6-6" stroke="#808000" stroke-width="0.6"/><circle cx="9" cy="6" r="1" fill="#2040f0"/></svg>
<svg class="a" style="left:896px;top:747px;" width="17" height="16" viewBox="0 0 17 16"><path d="M1 14l4-12h11v10h-4v2z" fill="#e01010" stroke="#800" stroke-width="0.6"/><text x="3" y="12" font-size="9" font-weight="bold" font-family="Liberation Sans" font-style="italic" fill="#fff">ATi</text></svg>
<svg class="a" style="left:914px;top:747px;" width="17" height="17" viewBox="0 0 17 17"><path d="M1 1l7 7" stroke="#e020e0" stroke-width="2"/><path d="M2 0l6 5" stroke="#2040f0" stroke-width="1"/><circle cx="10" cy="11" r="5.5" fill="#fff" stroke="#000"/><path d="M8.5 8v6l5-3z" fill="#00a000"/></svg>
<svg class="a" style="left:932px;top:747px;" width="17" height="16" viewBox="0 0 17 16"><rect x="6" y="1" width="9" height="7" fill="#d4d0c8" stroke="#000"/><rect x="7.5" y="2.5" width="6" height="4" fill="#404040"/><rect x="1" y="5" width="9" height="7" fill="#d4d0c8" stroke="#000"/><rect x="2.5" y="6.5" width="6" height="4" fill="#404040"/><path d="M0 14h11M6 13h10" stroke="#000" stroke-width="1.5"/></svg>
</body></html>
